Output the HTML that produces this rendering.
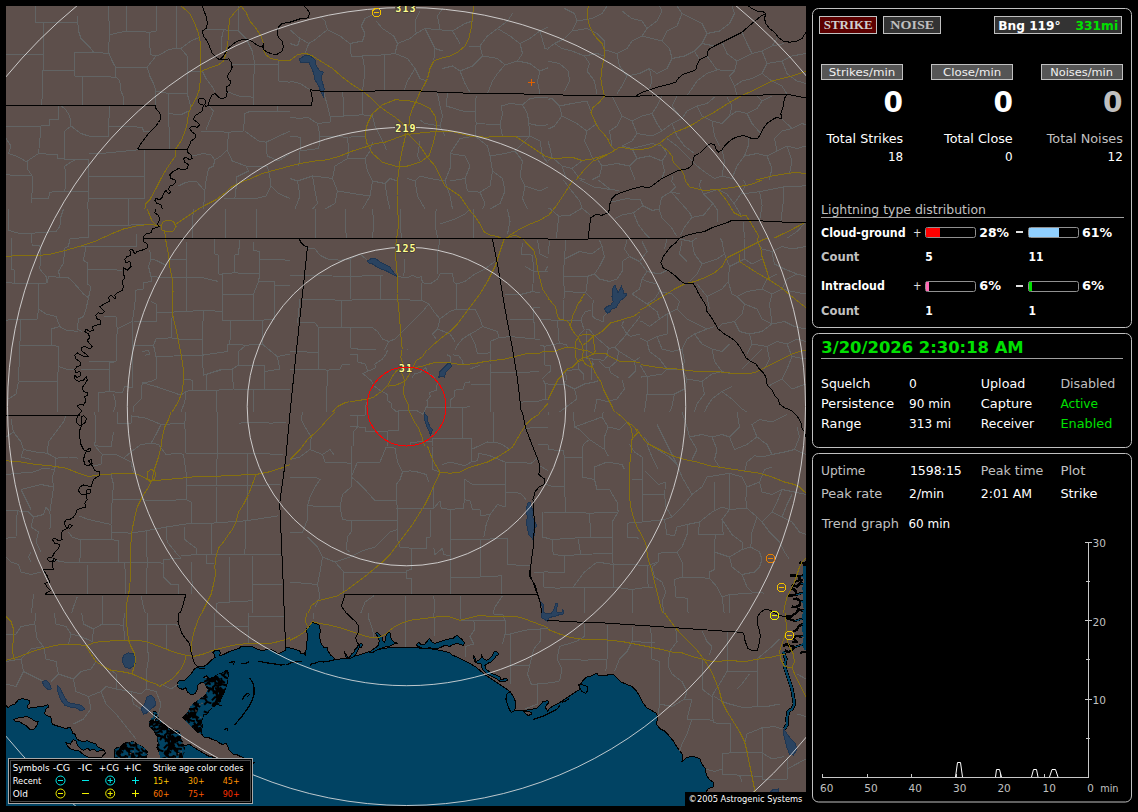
<!DOCTYPE html>
<html><head><meta charset="utf-8"><title>Lightning Display</title>
<style>html,body{margin:0;padding:0;background:#000;overflow:hidden}svg{display:block}text{white-space:pre}</style></head>
<body><svg width="1138" height="812" viewBox="0 0 1138 812">
<rect width="1138" height="812" fill="#000"/>
<defs><pattern id="marsh2" width="16" height="16" patternUnits="userSpaceOnUse"><rect width="16" height="16" fill="#000"/><rect x="10.5" y="5.1" width="2.0" height="2.9" fill="#014363"/><rect x="1.4" y="14.4" width="1.3" height="1.9" fill="#014363"/><rect x="6.2" y="1.4" width="2.1" height="2.0" fill="#014363"/><rect x="15.1" y="8.5" width="1.7" height="2.7" fill="#014363"/><rect x="10.5" y="3.4" width="1.1" height="1.9" fill="#014363"/><rect x="9.7" y="9.3" width="2.7" height="1.6" fill="#014363"/><rect x="7.2" y="12.6" width="1.4" height="2.2" fill="#014363"/><rect x="8.6" y="9.8" width="2.4" height="3.9" fill="#014363"/><rect x="1.4" y="14.4" width="2.1" height="2.9" fill="#014363"/><rect x="4.8" y="7.9" width="1.4" height="1.2" fill="#014363"/><rect x="13.4" y="10.7" width="1.2" height="1.4" fill="#014363"/><rect x="6.7" y="13.2" width="1.9" height="2.7" fill="#014363"/><rect x="7.7" y="14.5" width="2.4" height="1.7" fill="#014363"/><rect x="2.6" y="9.6" width="2.5" height="1.5" fill="#014363"/></pattern></defs>
<defs><clipPath id="mc"><rect x="6" y="6" width="800" height="800"/></clipPath><pattern id="marsh" width="48" height="48" patternUnits="userSpaceOnUse"><rect width="48" height="48" fill="#014363"/><path d="M15.5 7.2 L15.7 5.5 L17.4 4.4 L19.0 4.8 M17.4 4.4 L20.0 1.9 L18.7 -0.4 M20.0 1.9 M15.5 55.2 L15.7 53.5 L17.4 52.4 L19.0 52.8 M17.4 52.4 L20.0 49.9 L18.7 47.6 M20.0 49.9 M3.0 28.1 L5.8 25.8 L4.9 23.3 M5.8 25.8 L8.5 24.1 L8.3 21.5 M8.5 24.1 L8.6 22.5 L11.0 22.2 M8.6 22.5 L10.6 21.1 L9.9 19.3 M10.6 21.1 M27.6 25.2 L28.8 21.5 L30.9 20.8 M28.8 21.5 L31.2 20.7 L32.2 18.0 L34.2 16.8 L36.0 18.4 M34.2 16.8 L38.0 17.6 L39.4 18.5 M31.1 47.7 L34.0 45.4 L36.5 46.6 M34.0 45.4 L35.7 44.2 L35.0 40.9 M35.7 44.2 L37.2 43.0 L37.9 41.3 L39.5 38.5 M31.1 -0.3 L34.0 -2.6 L36.5 -1.4 M34.0 -2.6 L35.7 -3.8 L35.0 -7.1 M35.7 -3.8 L37.2 -5.0 L37.9 -6.7 L39.5 -9.5 M32.8 18.3 L34.3 19.7 L33.2 21.2 M34.3 19.7 L36.1 20.1 L38.1 21.2 L40.7 19.2 M38.1 21.2 M45.7 32.7 L44.0 32.4 L42.8 33.6 L43.2 36.3 M42.8 33.6 L43.2 36.5 L40.8 38.5 L41.6 40.1 M40.8 38.5 L40.1 40.7 L41.4 42.8 M40.1 40.7 L37.4 41.2 L36.4 43.2 M37.4 41.2 M12.7 39.8 L16.3 41.2 L17.4 39.4 M16.3 41.2 L17.7 42.3 L20.5 44.7 L23.2 43.3 M20.5 44.7 M15.8 10.7 L18.9 9.0 L20.1 6.5 L17.3 5.2 M20.1 6.5 L20.9 4.6 L21.1 1.1 M16.8 46.8 L18.8 46.6 L19.6 43.9 M18.8 46.6 L20.2 47.5 L20.6 50.9 M16.8 -1.2 L18.8 -1.4 L19.6 -4.1 M18.8 -1.4 L20.2 -0.5 L20.6 2.9 M22.9 8.6 L20.6 5.5 L18.3 3.1 L16.5 3.3 M18.3 3.1 L14.5 2.9 L11.8 5.2 L9.6 6.1 M6.3 0.7 L10.1 0.2 L12.8 2.5 L12.6 5.0 M12.8 2.5 L13.5 4.7 M6.3 48.7 L10.1 48.2 L12.8 50.5 L12.6 53.0 M12.8 50.5 L13.5 52.7 M40.0 2.9 L41.1 -0.5 L44.2 -2.4 L43.9 -3.9 M44.2 -2.4 L45.7 -3.7 L45.6 -6.1 M45.7 -3.7 L48.5 -4.2 L49.1 -2.6 M48.5 -4.2 L50.7 -4.4 L51.4 -6.9 M50.7 -4.4 L54.0 -2.5 M40.0 50.9 L41.1 47.5 L44.2 45.6 L43.9 44.1 M44.2 45.6 L45.7 44.3 L45.6 41.9 M45.7 44.3 L48.5 43.8 L49.1 45.4 M48.5 43.8 L50.7 43.6 L51.4 41.1 M50.7 43.6 L54.0 45.5 M-8.0 2.9 L-6.9 -0.5 L-3.8 -2.4 L-4.1 -3.9 M-3.8 -2.4 L-2.3 -3.7 L-2.4 -6.1 M-2.3 -3.7 L0.5 -4.2 L1.1 -2.6 M0.5 -4.2 L2.7 -4.4 L3.4 -6.9 M2.7 -4.4 L6.0 -2.5 M-8.0 50.9 L-6.9 47.5 L-3.8 45.6 L-4.1 44.1 M-3.8 45.6 L-2.3 44.3 L-2.4 41.9 M-2.3 44.3 L0.5 43.8 L1.1 45.4 M0.5 43.8 L2.7 43.6 L3.4 41.1 M2.7 43.6 L6.0 45.5 M29.4 24.3 L26.6 24.4 L24.7 21.7 L25.4 19.7 L28.9 18.8 L29.3 16.7 M28.9 18.8 L31.4 19.1 L31.5 22.4 M31.4 19.1 M7.4 34.4 L5.8 33.6 L4.8 32.1 L1.8 31.3 L2.4 29.1 M1.8 31.3 L-0.6 31.1 L-2.2 29.0 M-0.6 31.1 M55.4 34.4 L53.8 33.6 L52.8 32.1 L49.8 31.3 L50.4 29.1 M49.8 31.3 L47.4 31.1 L45.8 29.0 M47.4 31.1 M21.1 0.9 L20.9 4.8 L22.6 4.9 M20.9 4.8 L21.6 6.2 L23.1 7.2 L23.3 10.8 L25.7 11.5 M23.3 10.8 L23.4 13.1 L25.0 13.7 M23.4 13.1 L21.0 15.0 L21.1 18.7 L23.1 19.5 M21.1 18.7 M21.1 48.9 L20.9 52.8 L22.6 52.9 M20.9 52.8 L21.6 54.2 L23.1 55.2 L23.3 58.8 L25.7 59.5 M23.3 58.8 L23.4 61.1 L25.0 61.7 M23.4 61.1 L21.0 63.0 L21.1 66.7 L23.1 67.5 M21.1 66.7 M26.5 44.5 L29.1 46.5 L28.8 48.7 L26.3 49.0 M28.8 48.7 L30.1 50.9 L33.1 52.8 M26.5 -3.5 L29.1 -1.5 L28.8 0.7 L26.3 1.0 M28.8 0.7 L30.1 2.9 L33.1 4.8 M1.8 0.9 L-0.3 0.7 L-3.2 -0.5 L-6.4 -2.3 L-8.5 -2.5 L-9.0 0.3 M-8.5 -2.5 M1.8 48.9 L-0.3 48.7 L-3.2 47.5 L-6.4 45.7 L-8.5 45.5 L-9.0 48.3 M-8.5 45.5 M49.8 0.9 L47.7 0.7 L44.8 -0.5 L41.6 -2.3 L39.5 -2.5 L39.0 0.3 M39.5 -2.5 M49.8 48.9 L47.7 48.7 L44.8 47.5 L41.6 45.7 L39.5 45.5 L39.0 48.3 M39.5 45.5 M30.5 19.4 L29.0 19.8 L26.9 18.3 L28.4 15.8 M26.9 18.3 L24.8 18.0 L23.9 16.2 M24.8 18.0 M0.2 17.5 L0.0 19.1 L1.0 20.8 L3.5 20.5 M1.0 20.8 L3.5 21.8 L3.0 23.6 M3.5 21.8 L5.6 23.2 L8.9 22.3 M5.6 23.2 L6.0 25.1 L4.7 27.8 L2.6 29.5 L2.4 32.6 M2.6 29.5 M48.2 17.5 L48.0 19.1 L49.0 20.8 L51.5 20.5 M49.0 20.8 L51.5 21.8 L51.0 23.6 M51.5 21.8 L53.6 23.2 L56.9 22.3 M53.6 23.2 L54.0 25.1 L52.7 27.8 L50.6 29.5 L50.4 32.6 M50.6 29.5 M42.8 30.1 L40.6 28.4 L40.1 24.9 L40.1 21.2 L41.0 19.3 L38.5 17.1 M41.0 19.3 L41.5 16.7 L38.9 15.5 M41.5 16.7 L41.7 15.2 L43.5 13.1 M31.6 3.2 L33.7 0.2 L32.6 -2.4 M33.7 0.2 L35.4 -3.0 L38.0 -2.0 M35.4 -3.0 L36.7 -4.1 L39.1 -2.6 M36.7 -4.1 L38.3 -5.0 L41.7 -6.9 L41.1 -8.9 M41.7 -6.9 M31.6 51.2 L33.7 48.2 L32.6 45.6 M33.7 48.2 L35.4 45.0 L38.0 46.0 M35.4 45.0 L36.7 43.9 L39.1 45.4 M36.7 43.9 L38.3 43.0 L41.7 41.1 L41.1 39.1 M41.7 41.1 M24.8 22.3 L22.9 20.1 L21.7 21.1 M22.9 20.1 L20.4 17.6 L18.7 16.3 L17.1 16.6 M18.7 16.3 M35.9 12.6 L33.2 13.1 L31.1 12.5 L29.6 12.1 L29.7 9.8 M29.6 12.1 L27.7 10.4 L26.6 11.4 M27.7 10.4 L26.7 7.0 L23.5 7.2 M26.7 7.0 L25.1 5.2 L22.8 5.8 M25.1 5.2 L23.6 4.7 L23.7 2.9 M23.6 4.7 M46.6 20.9 L44.4 22.2 L42.6 19.4 M44.4 22.2 L41.4 23.6 L39.2 21.6 M41.4 23.6 L39.2 23.8 L38.0 25.8 M39.2 23.8 L37.4 25.0 L35.0 25.6 L33.7 23.7 M35.0 25.6 M8.0 7.8 L8.4 10.4 L6.3 11.8 M8.4 10.4 L9.7 11.8 L11.9 12.9 L13.4 12.6 L16.4 11.1 L17.8 12.0 M16.4 11.1 L18.7 7.9 L17.9 4.7 M18.7 7.9 M18.5 31.0 L15.0 29.8 L12.9 32.0 M15.0 29.8 L12.9 26.5 L9.1 26.2 L6.4 25.9 L4.9 24.5 L2.9 26.6 M4.9 24.5 M31.1 36.7 L29.7 36.2 L28.5 38.0 M29.7 36.2 L27.8 37.2 L26.0 37.3 L25.2 39.0 M26.0 37.3 L24.5 37.0 L23.7 35.0 M24.5 37.0 L23.2 35.3 L22.4 34.0 L22.1 32.4 L23.3 30.8 M22.1 32.4 M20.4 17.8 L18.2 16.8 L16.6 19.3 M18.2 16.8 L16.4 15.9 L12.8 15.8 L11.0 18.5 M12.8 15.8 L10.8 18.0 L8.0 17.9 M2.7 28.6 L4.4 25.0 L2.9 23.9 M4.4 25.0 L5.5 21.9 L2.3 20.9 M5.5 21.9 L5.4 19.9 M35.8 1.5 L36.6 -2.3 L35.6 -3.7 L37.0 -4.8 M35.6 -3.7 L36.3 -5.6 L38.6 -5.0 M36.3 -5.6 L34.8 -7.8 L35.5 -9.9 M34.8 -7.8 L35.1 -9.3 L37.9 -11.3 L37.2 -14.3 M37.9 -11.3 M35.8 49.5 L36.6 45.7 L35.6 44.3 L37.0 43.2 M35.6 44.3 L36.3 42.4 L38.6 43.0 M36.3 42.4 L34.8 40.2 L35.5 38.1 M34.8 40.2 L35.1 38.7 L37.9 36.7 L37.2 33.7 M37.9 36.7 M3.0 9.4 L5.2 9.4 L7.2 10.1 L9.4 9.8 L10.6 8.3 M9.4 9.8 L13.2 9.2 L15.2 8.4 L18.7 6.8 L20.2 9.4 M18.7 6.8 L20.9 6.4 L21.8 8.9 M20.9 6.4 M24.6 18.8 L26.2 18.9 L29.9 17.6 L31.5 19.0 L34.7 17.7 M31.5 19.0 L31.1 20.9 L28.3 21.1 M31.1 20.9 L28.6 23.6 L28.9 27.2 L26.4 28.7 M28.9 27.2 M9.6 11.9 L11.4 15.2 L14.9 15.0 M11.4 15.2 L12.4 17.0 L13.0 20.9 L11.1 21.4 M13.0 20.9 L13.7 23.3 M11.2 2.4 L9.5 2.5 L7.3 4.5 L5.9 5.1 L3.5 5.0 L2.5 3.4 M3.5 5.0 L0.8 6.3 L0.2 7.7 L-1.9 8.0 M0.2 7.7 L0.9 11.1 M59.2 2.4 L57.5 2.5 L55.3 4.5 L53.9 5.1 L51.5 5.0 L50.5 3.4 M51.5 5.0 L48.8 6.3 L48.2 7.7 L46.1 8.0 M48.2 7.7 L48.9 11.1 M3.0 4.9 L2.6 7.7 L2.8 9.8 L2.0 12.3 L0.5 12.5 M2.0 12.3 L-0.7 14.5 L-2.2 16.5 L-3.1 18.2 L-1.2 20.8 M-3.1 18.2 L-3.9 19.9 L-1.2 22.0 M-3.9 19.9 M51.0 4.9 L50.6 7.7 L50.8 9.8 L50.0 12.3 L48.5 12.5 M50.0 12.3 L47.3 14.5 L45.8 16.5 L44.9 18.2 L46.8 20.8 M44.9 18.2 L44.1 19.9 L46.8 22.0 M44.1 19.9 M4.3 29.9 L4.2 32.2 L5.9 32.3 M4.2 32.2 L4.1 35.7 L5.2 37.2 L4.2 39.7 L1.4 40.6 M4.2 39.7 L1.5 42.3 L-1.6 42.2 L-3.7 43.8 M52.3 29.9 L52.2 32.2 L53.9 32.3 M52.2 32.2 L52.1 35.7 L53.2 37.2 L52.2 39.7 L49.4 40.6 M52.2 39.7 L49.5 42.3 L46.4 42.2 L44.3 43.8 M2.0 45.1 L4.1 45.4 L4.9 46.7 L4.9 48.3 L7.1 50.4 L8.2 52.3 M2.0 -2.9 L4.1 -2.6 L4.9 -1.3 L4.9 0.3 L7.1 2.4 L8.2 4.3 M28.0 20.4 L26.9 18.8 L28.3 16.8 M26.9 18.8 L25.9 15.4 L26.8 13.1 L28.5 13.0 M26.8 13.1 L27.5 10.4 L25.7 8.0 M27.5 10.4 L29.6 8.6 L32.1 10.3 M29.6 8.6 L29.3 6.9 M33.2 5.3 L36.5 6.5 L38.9 8.8 L38.0 10.6 M38.9 8.8 L41.7 9.9 L43.8 10.5 L46.7 11.2 L49.0 10.4 L51.8 12.3 M49.0 10.4 M-14.8 5.3 L-11.5 6.5 L-9.1 8.8 L-10.0 10.6 M-9.1 8.8 L-6.3 9.9 L-4.2 10.5 L-1.3 11.2 L1.0 10.4 L3.8 12.3 M1.0 10.4 M32.6 43.0 L35.4 43.6 L39.1 43.2 L42.7 43.5 L43.0 45.8 M42.7 43.5 L45.1 43.1 L45.9 45.3 M45.1 43.1 L47.2 40.4 L50.6 40.9 M47.2 40.4 M-15.4 43.0 L-12.6 43.6 L-8.9 43.2 L-5.3 43.5 L-5.0 45.8 M-5.3 43.5 L-2.9 43.1 L-2.1 45.3 M-2.9 43.1 L-0.8 40.4 L2.6 40.9 M-0.8 40.4 M41.8 44.6 L43.8 44.3 L45.0 46.2 M43.8 44.3 L45.0 41.9 L44.2 40.5 M14.6 25.1 L11.8 24.0 L11.5 22.5 M11.8 24.0 L10.2 21.1 L8.4 20.9 L5.1 22.3 L4.5 25.8 L3.3 28.5 M24.8 23.7 L27.7 23.8 L29.1 22.9 L28.9 20.0 M6.8 9.6 L5.5 7.4 L4.6 6.0 L6.3 3.2 L7.7 1.2 L9.4 1.1 L12.3 -1.6 L12.0 -4.9 M12.3 -1.6 L16.1 -0.9 L17.9 -2.9 M16.1 -0.9 M6.8 57.6 L5.5 55.4 L4.6 54.0 L6.3 51.2 L7.7 49.2 L9.4 49.1 L12.3 46.4 L12.0 43.1 M12.3 46.4 L16.1 47.1 L17.9 45.1 M16.1 47.1 M20.9 37.8 L17.3 39.0 L16.3 41.6 L18.0 42.4 M16.3 41.6 L17.8 45.1 L16.6 46.6 M17.8 45.1 L16.3 47.8 L13.3 50.3 M20.9 -10.2 L17.3 -9.0 L16.3 -6.4 L18.0 -5.6 M16.3 -6.4 L17.8 -2.9 L16.6 -1.4 M17.8 -2.9 L16.3 -0.2 L13.3 2.3 M40.3 33.5 L42.4 33.7 L44.2 35.4 L45.4 36.9 L48.8 36.9 M45.4 36.9 L47.0 37.8 L49.6 36.8 M47.0 37.8 L48.5 37.1 L51.5 38.7 M48.5 37.1 L51.4 35.9 M-7.7 33.5 L-5.6 33.7 L-3.8 35.4 L-2.6 36.9 L0.8 36.9 M-2.6 36.9 L-1.0 37.8 L1.6 36.8 M-1.0 37.8 L0.5 37.1 L3.5 38.7 M0.5 37.1 L3.4 35.9 M36.3 34.1 L35.9 35.9 L38.6 36.7 M35.9 35.9 L36.4 37.6 L38.5 38.1 M36.4 37.6 L38.1 39.2 L41.4 38.5 M36.9 28.9 L35.4 28.7 L31.9 28.8 L31.3 30.7 M31.9 28.8 L30.7 27.6 L29.2 27.6 L27.4 29.3 M29.2 27.6 L25.7 27.5 L24.8 24.2 M25.7 27.5 M24.7 27.7 L23.9 29.7 L26.4 32.1 M23.9 29.7 L23.0 31.2 L24.3 33.1 M23.0 31.2 L21.4 31.5 L20.7 33.4 L22.9 35.8 M20.7 33.4 M11.2 22.1 L9.2 20.9 L7.8 22.9 M9.2 20.9 L7.3 19.6 L6.2 17.7 L8.2 15.1 M6.2 17.7 L4.5 16.8 L2.3 19.5 M4.5 16.8 L2.8 14.3 L0.9 14.5 M2.8 14.3 L4.2 11.3 L3.3 9.8 M4.2 11.3 L3.5 9.2 L5.1 6.9 M3.5 9.2 M59.2 22.1 L57.2 20.9 L55.8 22.9 M57.2 20.9 L55.3 19.6 L54.2 17.7 L56.2 15.1 M54.2 17.7 L52.5 16.8 L50.3 19.5 M52.5 16.8 L50.8 14.3 L48.9 14.5 M50.8 14.3 L52.2 11.3 L51.3 9.8 M52.2 11.3 L51.5 9.2 L53.1 6.9 M51.5 9.2 M5.1 9.9 L5.9 13.5 L8.7 16.2 L11.4 15.8 M8.7 16.2 L11.6 17.9 M20.6 27.6 L22.8 25.2 L25.9 25.3 L27.5 24.2 L30.0 25.4 M27.5 24.2 L27.8 21.7 L29.5 19.1 L31.0 19.4 M29.5 19.1 L32.2 18.5 M41.9 42.9 L41.2 45.6 L43.2 47.6 L44.8 46.9 M43.2 47.6 L44.9 50.0 M41.9 -5.1 L41.2 -2.4 L43.2 -0.4 L44.8 -1.1 M43.2 -0.4 L44.9 2.0 M24.6 30.7 L25.1 27.4 L26.9 26.7 L29.7 28.6 L31.0 30.3 L33.3 30.5 M31.0 30.3 L33.4 32.5 L33.3 34.6 M33.4 32.5 L36.7 34.4 L36.6 38.3" stroke="#000" stroke-width="2" fill="none" stroke-linecap="square"/><rect x="7.9" y="44.6" width="1.5" height="1.2" fill="#5d4f4b"/><rect x="3.3" y="38.3" width="1.5" height="1.2" fill="#5d4f4b"/><rect x="9.3" y="30.8" width="1.5" height="1.2" fill="#5d4f4b"/><rect x="34.6" y="39.1" width="1.5" height="1.2" fill="#5d4f4b"/><rect x="7.0" y="32.0" width="1.5" height="1.2" fill="#5d4f4b"/><rect x="39.9" y="38.2" width="1.5" height="1.2" fill="#5d4f4b"/><rect x="19.8" y="47.8" width="1.5" height="1.2" fill="#5d4f4b"/><rect x="36.5" y="31.2" width="1.5" height="1.2" fill="#5d4f4b"/><rect x="37.4" y="22.5" width="1.5" height="1.2" fill="#5d4f4b"/><rect x="37.6" y="11.1" width="1.5" height="1.2" fill="#5d4f4b"/><rect x="33.8" y="33.0" width="1.5" height="1.2" fill="#5d4f4b"/><rect x="47.2" y="32.6" width="1.5" height="1.2" fill="#5d4f4b"/><rect x="23.1" y="38.7" width="1.5" height="1.2" fill="#5d4f4b"/><rect x="38.3" y="17.2" width="1.5" height="1.2" fill="#5d4f4b"/></pattern></defs>
<g clip-path="url(#mc)" shape-rendering="crispEdges">
<rect x="6" y="6" width="800" height="800" fill="#5d4f4b"/>
<path d="M6.0 705.4 L8.2 707.6 L10.5 705.4 L15.0 703.9 L18.7 699.4 L22.4 698.7 L26.9 699.4 L29.9 700.9 L29.2 703.9 L26.9 706.1 L28.4 708.4 L32.1 707.6 L37.4 706.9 L43.3 706.1 L47.8 704.6 L48.6 706.9 L45.6 709.1 L44.8 713.6 L47.1 715.9 L50.8 716.6 L51.6 720.3 L52.3 724.1 L56.0 725.6 L61.3 727.1 L65.8 728.6 L70.2 727.1 L71.7 730.0 L72.5 733.0 L75.5 734.5 L76.2 738.3 L79.2 740.5 L83.7 742.0 L87.4 740.5 L91.2 742.7 L95.6 743.5 L97.1 746.5 L101.6 748.7 L104.6 750.2 L105.3 753.2 L103.1 755.4 L101.6 757.7 L101.6 763.7 L114.3 763.7 L114.3 757.7 L115.1 753.9 L114.3 750.2 L116.5 748.0 L120.3 747.2 L122.5 744.2 L127.0 742.0 L130.0 742.7 L133.0 741.2 L136.0 744.2 L140.4 745.7 L144.9 748.7 L147.2 751.0 L146.4 757.7 L146.4 763.7 L161.4 763.7 L161.4 757.7 L159.9 753.2 L156.9 747.2 L158.4 742.7 L161.4 739.8 L162.9 736.8 L159.9 732.3 L155.4 730.8 L151.7 727.8 L149.4 724.8 L151.7 721.8 L153.9 720.3 L154.6 715.9 L153.1 712.1 L155.4 711.4 L156.9 715.1 L158.4 717.3 L159.9 721.8 L164.4 724.8 L167.3 727.8 L170.3 730.8 L176.0 732.3 L176.0 732.3 L180.8 737.8 L181.5 741.6 L179.3 744.6 L185.3 745.3 L189.8 744.6 L194.2 747.6 L200.2 751.3 L207.7 755.8 L213.7 757.3 L219.6 759.5 L231.6 764.0 L249.5 767.0 L254.0 762.5 L248.0 759.5 L240.5 756.5 L237.6 755.0 L233.1 754.3 L229.3 750.5 L227.8 746.1 L225.6 743.1 L222.6 744.6 L219.6 743.1 L216.6 740.8 L212.2 739.3 L207.7 737.1 L203.9 737.1 L201.7 734.1 L201.0 729.6 L202.5 726.6 L201.7 722.2 L202.5 717.7 L203.9 714.7 L207.7 713.9 L209.2 710.2 L212.9 707.2 L216.6 704.2 L221.1 705.7 L220.4 701.2 L221.9 696.8 L224.1 692.3 L225.6 687.8 L227.1 683.3 L227.8 678.1 L228.6 673.6 L227.1 669.9 L222.6 672.9 L218.1 674.4 L213.7 677.3 L209.2 678.8 L206.2 675.9 L203.9 677.3 L204.7 681.8 L201.0 682.6 L198.0 684.8 L197.2 689.3 L195.0 693.8 L191.2 694.5 L187.5 692.3 L186.0 687.8 L183.0 689.3 L179.3 688.6 L177.1 686.3 L177.1 682.6 L180.0 680.3 L184.5 680.3 L187.5 677.3 L191.2 673.6 L194.2 669.1 L198.0 666.9 L203.2 666.9 L207.7 663.9 L211.4 660.2 L215.2 657.2 L214.4 654.9 L212.9 652.7 L215.2 650.5 L218.9 650.5 L220.4 652.7 L219.6 655.7 L222.6 654.9 L228.6 652.0 L234.6 649.7 L239.8 648.2 L240.5 646.0 L251.0 646.0 L254.0 647.5 L258.5 649.7 L263.0 650.5 L268.9 649.0 L273.4 650.5 L277.9 653.4 L280.9 652.7 L285.4 650.5 L285.4 648.2 L288.4 647.5 L294.3 649.0 L300.0 651.2 L300.9 653.8 L304.6 653.0 L305.4 656.0 L306.1 649.3 L306.9 641.8 L307.6 634.4 L306.1 631.4 L306.9 628.4 L309.9 625.4 L312.1 622.4 L315.1 623.2 L318.8 624.6 L320.3 629.9 L319.6 637.3 L321.1 643.3 L324.1 647.8 L327.1 647.1 L327.8 650.8 L330.8 655.3 L333.8 657.5 L334.5 659.8 L342.7 658.7 L350.2 657.2 L357.7 655.3 L363.7 653.5 L369.6 651.5 L377.1 649.7 L384.6 648.3 L392.0 647.5 L399.5 647.5 L407.0 647.8 L414.4 647.5 L421.9 648.3 L429.4 648.7 L436.9 649.7 L444.3 651.2 L450.0 652.7 L452.0 655.1 L457.9 657.3 L463.9 660.3 L469.9 663.3 L475.9 667.1 L480.3 670.8 L484.8 674.5 L489.3 677.5 L493.8 680.5 L498.3 683.5 L502.7 686.5 L507.2 689.5 L510.2 691.7 L513.2 696.2 L515.4 701.4 L515.9 706.6 L514.7 710.4 L520.7 710.8 L525.2 710.4 L529.6 709.6 L534.1 708.9 L537.1 708.1 L539.3 705.9 L541.6 703.7 L543.1 701.4 L547.6 700.7 L549.1 702.2 L546.1 705.2 L545.8 708.1 L547.6 711.1 L549.8 708.1 L553.5 705.9 L558.0 703.7 L562.5 700.7 L567.0 697.7 L571.5 694.7 L575.9 691.7 L579.7 689.5 L578.9 685.7 L581.2 683.5 L583.4 679.8 L587.1 676.8 L590.9 676.0 L593.9 674.5 L596.9 673.0 L598.4 675.3 L602.8 676.0 L610.0 674.5 L613.2 674.3 L616.6 677.6 L621.0 682.0 L626.5 684.3 L632.1 686.5 L636.5 690.9 L639.8 696.4 L643.2 703.1 L646.5 707.5 L652.0 710.8 L656.4 713.1 L657.6 717.5 L656.4 724.1 L659.8 728.6 L664.2 730.8 L668.6 735.2 L673.1 740.8 L676.4 746.3 L679.7 750.7 L683.0 755.2 L681.9 761.8 L686.4 757.4 L693.0 756.3 L699.7 758.5 L701.9 764.0 L705.2 768.5 L706.3 775.1 L709.6 779.5 L714.1 782.9 L712.9 787.3 L708.5 788.4 L706.3 791.7 L705.2 808.3 L705.0 812.0 L0.0 812.0Z" fill="#014363" stroke="#000" stroke-width="1" stroke-linejoin="round"/>
<path d="M344.2 651.5 L345.7 654.1 L348.0 657.5 L350.2 656.8 L351.7 653.8 L353.9 652.3 L354.7 650.0 L356.9 647.8 L358.4 644.8 L361.4 643.3 L362.9 644.8 L361.4 647.1 L359.2 647.8 L357.7 650.8 L356.2 653.8 L353.2 656.8 L350.2 658.6 L346.5 658.3Z" fill="#014363" stroke="#000" stroke-width="1" stroke-linejoin="round"/>
<path d="M369.6 652.3 L371.9 650.0 L375.6 647.8 L378.6 644.8 L379.3 640.3 L377.8 636.6 L375.6 633.6 L377.1 632.1 L380.1 635.1 L382.3 637.3 L383.1 641.1 L384.6 642.6 L385.3 639.6 L386.1 635.9 L387.6 632.1 L389.8 632.1 L390.5 635.9 L391.3 638.8 L393.5 641.8 L398.0 643.3 L393.5 644.1 L389.1 646.3 L384.6 647.1 L380.1 648.6 L375.6 650.8 L371.9 653.0Z" fill="#014363" stroke="#000" stroke-width="1" stroke-linejoin="round"/>
<path d="M416.7 644.1 L418.9 642.6 L421.2 644.8 L424.9 644.1 L427.9 640.3 L429.4 638.1 L430.9 640.3 L432.4 642.6 L435.4 643.3 L439.8 641.8 L444.3 640.3 L450.0 638.8 L453.3 638.1 L457.0 635.1 L459.3 637.3 L461.5 639.1 L464.5 642.6 L463.7 645.6 L460.8 644.5 L457.0 643.6 L453.3 644.5 L450.0 646.3 L444.3 645.6 L439.8 647.8 L435.4 648.6 L429.4 647.8 L423.4 648.6 L419.7 647.1 L416.7 645.6Z" fill="#014363" stroke="#000" stroke-width="1" stroke-linejoin="round"/>
<path d="M473.6 655.9 L475.9 658.8 L475.1 661.8 L478.8 660.3 L481.8 657.3 L481.1 654.4 L483.3 658.8 L486.3 660.3 L489.3 658.8 L492.3 655.9 L493.8 652.1 L496.8 651.4 L499.0 654.4 L496.0 655.9 L494.5 658.8 L491.5 661.8 L487.8 663.3 L484.8 665.6 L486.3 669.3 L489.3 671.5 L492.3 673.8 L496.8 675.3 L499.8 676.8 L501.2 679.8 L505.7 678.3 L508.0 679.8 L505.7 681.2 L502.7 682.0 L499.8 681.2 L496.8 679.0 L492.3 676.8 L487.8 674.5 L484.1 671.5 L481.8 667.8 L481.1 664.1 L477.3 663.3 L474.4 661.8Z" fill="#014363" stroke="#000" stroke-width="1" stroke-linejoin="round"/>
<path d="M508.0 693.2 L510.2 691.7 L513.2 696.2 L515.4 701.4 L515.9 706.6 L514.7 710.4 L511.7 712.3 L510.2 711.1 L508.7 708.1 L507.2 703.7 L506.0 699.2 L506.5 694.7Z" fill="#014363" stroke="#000" stroke-width="1" stroke-linejoin="round"/>
<path d="M578.9 684.2 L583.4 685.0 L587.1 686.5 L587.9 690.2 L585.7 693.2 L581.9 691.7 L580.4 688.7Z" fill="#014363" stroke="#000" stroke-width="1" stroke-linejoin="round"/>
<path d="M204.7 677.3 L209.2 678.8 L213.7 677.3 L218.1 674.4 L222.6 672.9 L227.1 669.9 L228.6 673.6 L227.8 678.1 L227.1 683.3 L225.6 687.8 L224.1 692.3 L221.9 696.8 L220.4 701.2 L221.1 705.7 L216.6 704.2 L212.9 707.2 L209.2 710.2 L207.7 713.9 L203.9 714.7 L202.5 717.7 L201.7 722.2 L202.5 726.6 L201.0 729.6 L201.7 734.1 L197.2 732.6 L192.7 728.1 L188.3 723.7 L182.3 717.7 L186.8 713.2 L189.8 707.2 L194.2 702.7 L200.2 698.3 L204.7 695.3 L207.7 689.3 L204.7 684.8 L203.9 680.3Z" fill="url(#marsh)"/>
<path d="M149.4 721.4 L153.9 714.7 L156.1 711.7 L157.6 714.7 L156.9 717.7 L162.9 723.7 L168.8 728.1 L174.8 729.6 L179.3 731.1 L181.5 737.1 L179.3 744.6 L173.3 746.8 L167.3 750.5 L162.9 755.0 L160.6 758.0 L159.1 753.5 L159.9 747.6 L157.6 743.1 L156.9 737.1 L152.4 729.6 L149.4 726.6Z" fill="url(#marsh)"/>
<path d="M114.3 760.7 L115.1 753.9 L114.3 750.2 L116.5 748.0 L120.3 747.2 L122.5 744.2 L127.0 742.0 L130.0 742.7 L133.0 741.2 L136.0 744.2 L140.4 745.7 L144.9 748.7 L147.2 751.0 L146.4 760.7Z" fill="url(#marsh)"/>
<path d="M161.4 760.7 L159.9 753.2 L156.9 747.2 L158.4 742.7 L161.4 739.8 L162.9 736.8 L159.9 732.3 L155.4 730.8 L151.7 727.8 L149.4 724.8 L151.7 721.8 L153.9 720.3 L154.6 715.9 L153.1 712.1 L155.4 711.4 L156.9 715.1 L158.4 717.3 L159.9 721.8 L164.4 724.8 L167.3 727.8 L170.3 730.8 L176.0 732.3 L182.3 739.8 L185.3 750.2 L182.3 760.7Z" fill="url(#marsh)"/>
<path d="M130.0 743.1 L134.5 741.6 L139.0 744.6 L146.4 750.5 L147.9 755.0 L144.9 758.0 L139.0 759.5 L130.0 759.5Z" fill="url(#marsh)"/>
<path d="M807.2 562.4 L802.1 563.3 L799.5 562.4 M807.2 565.9 L802.9 565.0 M807.2 574.5 L800.3 576.2 L793.4 575.3 L790.0 575.3 M800.3 576.2 L798.6 580.5 L795.2 581.4 M807.2 584.8 L800.3 583.1 L796.9 586.6 L791.7 584.8 M800.3 583.1 L802.1 578.8 M807.2 591.7 L800.3 593.4 L795.2 595.2 L790.0 595.5 L786.6 596.0 M796.9 594.8 L795.2 590.0 L791.7 588.3 M807.2 600.3 L800.3 601.2 L796.9 598.6 L793.4 599.5 M800.3 601.2 L799.5 605.5 L795.2 607.2 L791.7 606.4 M807.2 609.0 L802.1 610.7 L798.6 609.0 L796.9 612.4 L791.7 615.9 L786.6 616.7 M807.2 617.6 L800.3 619.3 L795.2 621.0 L790.0 619.3 L785.7 617.6 M807.2 626.2 L802.1 624.5 L798.6 626.2 L796.9 629.7 L793.4 631.4 M807.2 634.8 L800.3 636.6 L796.9 635.7 L793.4 638.3 L796.9 641.7 L791.7 641.7 M807.2 643.4 L800.3 645.2 L795.2 646.9 L790.0 646.0 L786.6 644.3 L783.1 646.0 M795.2 646.9 L791.7 650.3 L788.3 652.1 L784.8 650.3 M807.2 652.1 L802.1 652.1 L800.3 653.8" fill="none" stroke="#000" stroke-width="2.4" stroke-linejoin="round"/>
<path d="M807.2 575.3 L800.7 576.6 M807.2 584.5 L801.2 583.4 M807.2 592.1 L800.7 593.6 L796.0 595.0 M807.2 600.7 L800.7 601.4 M807.2 609.3 L802.4 610.7 M807.2 617.9 L800.7 619.3 L795.5 620.9 M807.2 626.2 L802.4 624.8 M807.2 635.2 L800.7 636.6 M807.2 643.8 L800.7 645.2 L795.5 646.7" fill="none" stroke="#014363" stroke-width="1.1"/>
<path d="M803.4 565.9 L807.2 565.9 L807.2 650.3 L804.1 650.3 L802.4 643.4 L803.8 636.6 L801.7 629.7 L803.1 622.8 L802.1 615.9 L803.8 609.0 L802.4 602.1 L803.4 595.2 L802.1 588.3 L803.8 581.4 L802.8 574.5Z" fill="#014363"/>
<path d="M65.8 742.7 L70.2 744.2 L73.2 739.8 L76.2 741.2 L77.7 745.7 L80.7 748.7 L83.7 750.2 L87.4 748.0 L89.7 750.2 L94.1 749.5 L97.1 751.7 L101.6 750.2 L104.6 751.0 L105.3 753.2 L103.1 755.4 L101.6 757.7 L89.7 757.7 L83.7 754.7 L79.2 751.0 L74.7 750.2 L70.2 748.7 L67.2 745.7Z" fill="#5d4f4b" stroke="#000" stroke-width="1" stroke-linejoin="round"/>
<path d="M13.5 719.6 L17.2 718.1 L22.4 717.3 L26.9 716.6 L31.4 718.8 L35.1 721.1 L38.1 721.8 L37.4 724.8 L35.1 727.8 L32.9 730.0 L29.9 729.3 L26.9 726.3 L23.2 724.1 L19.4 721.8 L15.7 721.8Z" fill="#5d4f4b" stroke="#000" stroke-width="1" stroke-linejoin="round"/>
<path d="M523.7 711.9 L528.1 715.6 L531.9 714.1 L531.1 712.3 L527.4 711.4Z" fill="#5d4f4b" stroke="#000" stroke-width="1" stroke-linejoin="round"/>
<path d="M286.0 665.0 L290.5 663.0 L294.9 662.1 L302.4 661.4 M309.9 665.7 L312.1 663.6 L315.9 662.9 L319.6 661.4 L323.3 662.0 L329.3 661.0 L334.5 659.8 M280.0 665.3 L283.7 664.5 M533.4 719.3 L538.6 717.8 L544.6 715.6 L550.5 712.6 L556.5 709.6 L560.3 705.4 M561.8 702.2 L566.2 700.7 L569.2 698.4 M506.5 694.7 L506.0 699.2 L507.2 703.7 L508.7 708.1 L510.2 711.1 L511.7 712.6 M249.5 678.1 L252.5 681.8 L254.0 687.8 L254.1 693.8 L252.5 699.8 L249.5 705.7 L245.8 711.0 L242.0 716.2 L237.6 721.4 L234.6 725.2 M228.6 662.4 L234.6 661.7 L233.1 665.1 M241.3 663.9 L245.8 663.2 L249.5 661.7 M258.5 660.9 L264.4 662.4 L273.4 663.9 L279.4 664.4 L285.4 664.6 M242.0 699.8 L245.0 695.3 L248.0 693.0 L249.5 694.5 L246.5 697.5 M224.1 729.6 L227.8 728.1 L227.1 730.4" fill="none" stroke="#000" stroke-width="1.2" stroke-linejoin="round"/>
<path d="M35.5 6.0 L35.5 22.2 L43.0 23.0 L43.0 70.5 L41.8 104.8 M35.5 22.2 L77.2 22.2 M77.2 16.0 L78.5 31.0 L81.0 38.5 L89.8 47.2 L93.5 52.2 M6.0 54.8 L43.0 54.8 M43.0 70.5 L74.8 70.5 L74.8 52.2 L93.5 52.2 L108.5 53.5 M74.8 70.5 L74.8 76.0 L82.2 76.0 L82.2 104.8 M82.2 76.0 L116.0 77.2 L119.8 81.0 L121.0 91.0 L123.0 96.0 L123.5 104.8 M108.5 6.0 L109.0 21.0 L109.8 34.8 L108.5 46.0 L109.0 53.5 L112.2 61.0 L115.5 67.2 L116.0 77.2 M109.8 34.8 L126.0 31.0 L126.0 6.0 M126.0 31.0 L149.8 32.2 L156.0 31.0 L156.0 6.0 M149.8 32.2 L149.8 46.0 L151.0 54.8 L157.2 56.0 L168.5 49.8 L176.0 48.0 L176.0 6.0 M115.5 67.2 L147.2 67.2 L156.0 56.0 M147.2 67.2 L149.8 76.0 L153.5 83.5 L156.0 91.0 L155.2 105.2 M156.0 91.0 L168.5 93.5 L187.2 93.5 L187.2 56.0 L181.0 48.5 L176.0 48.0 M168.5 93.5 L168.5 113.5 L169.8 148.5 M168.5 113.5 L181.0 114.8 L188.5 111.0 M187.2 71.0 L200.5 71.0 M181.0 48.5 L191.0 41.0 L199.8 37.2 M206.0 29.8 L223.5 29.8 L238.5 31.0 L238.5 6.0 M223.5 29.8 L221.0 41.0 L222.2 53.5 M238.5 31.0 L246.0 38.5 L252.2 51.0 L254.8 63.5 L253.5 81.0 L253.5 104.8 M232.2 64.8 L278.5 64.8 L278.5 81.0 L290.0 82.2 M278.5 64.8 L278.5 59.8 M202.2 71.0 L206.0 78.5 L213.5 88.5 L214.8 92.2 M228.5 92.2 L238.5 96.0 L253.5 97.2 M6.0 126.0 L41.0 126.0 L49.8 125.5 L49.8 119.8 L58.5 119.8 L58.5 106.0 M41.0 126.0 L39.8 141.0 L38.5 153.5 L27.2 161.0 L27.2 168.5 L32.2 176.0 L32.2 191.0 L31.0 203.5 M6.0 138.5 L11.0 146.0 L8.5 153.5 L16.0 156.0 L21.0 158.5 L27.2 162.2 M38.5 153.5 L57.2 154.8 L57.2 158.5 L74.8 159.8 L64.8 166.0 L66.0 181.0 L64.8 191.0 L49.8 192.2 L48.5 198.5 L31.0 198.5 M64.8 158.5 L64.8 131.0 L71.0 126.0 L69.8 116.0 L64.8 108.5 L61.0 106.0 M71.0 126.0 L81.0 133.5 L88.5 136.0 L108.5 136.0 L108.5 126.0 L109.8 106.0 M108.5 126.0 L142.2 127.2 L143.5 131.0 L149.8 131.0 M88.5 166.0 L88.5 176.0 L144.8 176.0 L144.8 149.8 M88.5 176.0 L88.5 198.5 L144.8 198.5 L144.8 176.0 M88.5 198.5 L87.2 209.0 M128.5 198.5 L128.5 209.0 M64.8 191.0 L88.5 191.0 M88.5 153.5 L101.0 153.5 L137.8 149.8 M74.8 159.8 L88.5 159.8 L88.5 166.0 M6.0 174.8 L32.2 176.0 M192.2 156.0 L203.5 153.5 L211.0 154.8 L214.8 159.8 L221.0 156.0 L227.2 149.8 L228.5 132.2 L201.0 131.0 M228.5 132.2 L243.5 131.0 L244.8 113.5 L251.0 111.0 L277.2 111.0 L277.2 106.0 M208.0 104.8 L213.5 111.0 L206.0 129.8 M244.8 131.0 L258.5 141.0 L266.0 142.2 L267.2 156.0 L278.5 161.0 L290.0 153.5 M266.0 142.2 L290.0 131.0 M227.2 149.8 L232.2 161.0 L246.0 166.0 L248.5 171.0 L236.0 177.2 L236.0 188.5 L234.8 198.5 L223.5 198.5 M214.8 159.8 L213.5 166.0 L208.5 168.5 L206.0 181.0 L204.8 191.0 L203.5 209.0 M178.5 186.0 L186.0 182.2 L196.0 181.0 L204.8 191.0 M246.0 166.0 L267.2 166.0 L269.8 176.0 L271.0 186.0 L278.5 193.5 L290.0 198.5 M271.0 186.0 L266.0 196.0 L256.0 198.5 L234.8 198.5 M277.2 111.0 L290.0 111.0 M187.2 93.5 L191.0 107.2 M290.0 29.8 L300.0 38.5 L308.8 43.5 L315.0 39.8 L322.5 33.5 L327.5 29.8 L325.0 21.0 L320.0 16.0 M308.8 43.5 L305.0 53.5 M327.5 29.8 L340.0 36.0 L350.0 43.5 L362.5 41.0 L365.0 33.5 L361.2 26.0 L365.0 18.5 L375.0 13.5 M350.0 43.5 L351.2 56.0 L362.5 56.0 L385.0 54.8 L395.0 53.5 L397.5 43.5 L393.8 36.0 L382.5 28.5 L376.2 21.0 M362.5 56.0 L365.0 71.0 L362.5 91.0 M385.0 54.8 L384.5 71.0 L385.0 91.0 M395.0 53.5 L407.5 58.5 L415.0 68.5 L420.0 78.5 L426.2 81.0 M415.0 68.5 L407.5 81.0 L403.8 91.0 M397.5 43.5 L410.0 38.5 L416.2 33.5 L425.0 28.5 L435.0 48.5 L442.5 51.0 M416.2 33.5 L415.0 21.0 L420.0 11.0 M425.0 28.5 L440.0 29.8 L452.5 31.0 L460.0 43.5 M440.0 29.8 L437.5 16.0 L442.5 8.5 M452.5 31.0 L465.0 23.5 L472.5 21.0 M435.0 48.5 L433.8 59.8 M442.5 68.5 L452.5 66.0 L460.0 71.0 L465.0 83.5 L470.0 92.2 M460.0 71.0 L472.5 66.0 L482.5 56.0 L480.0 46.0 L468.8 46.0 M482.5 56.0 L497.5 58.5 L505.0 64.8 L497.5 73.5 L492.5 81.0 L487.5 93.5 M480.0 46.0 L487.5 36.0 L507.5 21.0 L512.5 13.5 M497.5 28.5 L510.0 36.0 L520.0 43.5 L530.0 38.5 L540.0 31.0 L548.0 27.0 M505.0 64.8 L517.5 61.0 L530.0 63.5 L540.0 71.0 L548.0 67.8 M520.0 43.5 L522.5 53.5 L517.5 61.0 M540.0 71.0 L537.5 81.0 L540.0 94.0 M548.0 49.2 L545.0 48.5 L540.0 31.0 M290.0 81.0 L300.0 83.5 L310.0 89.8 M323.8 92.2 L327.5 106.0 L330.0 116.0 L343.8 116.0 L343.8 104.8 L342.5 92.2 M290.0 117.2 L300.0 118.5 L307.5 117.2 L317.5 123.5 L330.0 122.2 L330.0 116.0 M343.8 116.0 L362.5 114.8 L372.5 116.0 M362.5 92.2 L362.5 114.8 M317.5 123.5 L320.0 136.0 L318.8 148.5 L300.0 151.0 L298.8 166.0 M320.0 136.0 L347.5 137.2 L348.8 151.0 L347.5 158.5 M348.8 137.2 L365.0 136.0 M290.0 136.0 L300.0 137.2 L300.0 151.0 M437.5 93.5 L440.0 106.0 L442.5 116.0 L440.0 126.0 L445.0 136.0 M447.5 93.5 L446.2 106.0 L462.5 111.0 L475.0 111.0 L476.2 96.0 M475.0 111.0 L476.2 123.5 L475.0 136.0 L460.0 138.5 L450.0 153.5 M476.2 123.5 L500.0 124.8 L502.5 113.5 L501.2 106.0 L510.0 103.5 L522.5 104.8 L527.5 113.5 L528.8 123.5 L530.0 136.0 M500.0 124.8 L502.5 136.0 L530.0 136.0 L540.0 141.0 M522.5 104.8 L530.0 98.5 L540.0 97.2 L548.0 98.0 M548.0 124.7 L540.0 126.0 L528.8 123.5   M440.0 126.0 L425.0 123.5 L420.0 119.8 M450.0 153.5 L465.0 156.0 L470.0 166.0 L465.0 178.5 L467.5 191.0 L480.0 192.2 L490.0 186.0 L492.5 171.0 L490.0 156.0 L487.5 146.0 L475.0 136.0 M490.0 156.0 L505.0 153.5 L515.0 151.0 L522.5 161.0 L520.0 176.0 L525.0 186.0 L540.0 191.0 L547.5 187.2 M492.5 171.0 L502.5 178.5 L505.0 191.0 L500.0 203.5 L490.0 209.0 M515.0 151.0 L530.0 136.0 M540.0 141.0 L542.5 156.0 L548.0 163.3  M450.0 153.5 L450.0 168.5 L445.0 181.0 L430.0 178.5 L420.0 176.0 L415.0 181.0 L407.5 178.5 M445.0 181.0 L450.0 196.0 L452.5 209.0 M465.0 178.5 L450.0 181.0 M290.0 178.5 L297.5 181.0 L312.5 176.0 L332.5 178.5 L335.0 166.0 L347.5 158.5 L365.0 158.5 L370.0 151.0 L372.5 142.2 M332.5 178.5 L337.5 191.0 L335.0 203.5 L325.0 209.0 M365.0 158.5 L367.5 171.0 L372.5 181.0 L385.0 183.5 L390.0 178.5 L397.5 181.0 M372.5 181.0 L370.0 196.0 L362.5 209.0 M297.5 181.0 L300.0 196.0 L295.0 209.0 M312.5 176.0 L315.0 191.0 L317.5 203.5 L312.5 209.0 M337.5 191.0 L352.5 193.5 L370.0 196.0 M385.0 183.5 L387.5 198.5 L390.0 209.0 M415.0 181.0 L417.5 196.0 L425.0 209.0 M480.0 192.2 L485.0 203.5 L482.5 209.0 M525.0 186.0 L522.5 198.5 L527.5 209.0 M372.5 116.0 L375.0 126.0 L385.0 146.0 L386.2 149.8 M420.0 141.0 L417.5 156.0 L420.0 161.0 M290.0 43.5 L297.5 46.0 L300.0 38.5 M548.0 48.4 L554.5 43.5 L564.5 38.5 L572.0 31.0 L577.0 21.0 L574.5 13.5 L564.5 8.5  M548.0 61.2 L559.5 63.5 L568.2 71.0 L569.5 81.0 L564.5 91.0 M554.5 43.5 L562.0 48.5 L572.0 51.0 L584.5 56.0 L589.5 63.5 L587.0 71.0 L594.5 81.0 L597.0 93.5 M572.0 31.0 L587.0 28.5 L597.0 33.5 M577.0 21.0 L592.0 18.5 L602.0 13.5 L607.0 6.0 M604.5 49.8 L617.0 53.5 L627.0 48.5 L632.0 41.0 L642.0 36.0 L647.0 28.5 L642.0 21.0 L632.0 18.5 L622.0 11.0 M617.0 53.5 L619.5 66.0 L627.0 76.0 L622.0 86.0 L617.0 93.5 M627.0 76.0 L639.5 73.5 L649.5 68.5 L657.0 73.5 L667.0 68.5 L672.0 58.5 L669.5 48.5 L662.0 41.0 L642.0 36.0 M649.5 68.5 L652.0 81.0 L649.5 88.5 M672.0 58.5 L684.5 56.0 L694.5 51.0 L702.0 43.5 L707.0 33.5 L702.0 23.5 L682.0 13.5 L677.0 6.0 M662.0 41.0 L667.0 31.0 L677.0 26.0 L682.0 13.5 M647.0 28.5 L657.0 21.0 L662.0 11.0 L659.5 6.0 M707.0 33.5 L719.5 31.0 L729.5 23.5 L734.5 13.5 L732.0 6.0 M694.5 51.0 L699.5 59.8 M702.0 43.5 L714.5 46.0 M742.0 32.2 L747.0 43.5 L752.0 53.5 L762.0 51.0 L772.0 46.0 L777.0 38.5 M722.0 42.2 L727.0 53.5 L737.0 61.0 L734.5 71.0 L729.5 76.0 L734.5 86.0 L737.0 95.5 M737.0 61.0 L752.0 53.5 M734.5 71.0 L717.0 69.8 L707.0 73.5 L697.0 81.0 L692.0 88.5 L687.0 95.5 M707.0 56.0 L717.0 69.8 M762.0 51.0 L767.0 63.5 L762.0 73.5 L752.0 78.5 L742.0 81.0 L734.5 86.0 M767.0 63.5 L782.0 61.0 L792.0 56.0 L806.0 53.5 M782.0 61.0 L787.0 73.5 L797.0 81.0 L806.0 83.5 M762.0 73.5 L772.0 81.0 L782.0 86.0 L787.0 94.2 M772.0 46.0 L784.5 43.5 M548.0 99.3 L552.0 98.5 L559.5 106.0 L562.0 116.0 L554.5 126.0 L548.0 129.2 M559.5 106.0 L572.0 103.5 L587.0 101.0 L590.8 111.0 M562.0 116.0 L577.0 123.5 L587.0 131.0 L584.5 141.0 L589.5 151.0 L593.2 159.8 M587.0 131.0 L597.0 123.5 M548.0 141.5 L549.5 146.0 L552.0 157.2 M612.0 96.0 L622.0 116.0 L632.0 121.0 L642.0 116.0 L652.0 113.5 L657.0 106.0 L662.0 96.0 M622.0 116.0 L617.0 126.0 L609.5 131.0 L612.0 146.0 M632.0 121.0 L637.0 133.5 L632.0 141.0 L622.0 146.0 M637.0 133.5 L652.0 136.0 L662.0 131.0 L672.0 123.5 L682.0 118.5 L687.0 111.0 L697.0 106.0 L707.0 103.5 L714.5 97.2 M652.0 113.5 L657.0 123.5 L662.0 131.0 M672.0 123.5 L677.0 136.0 L684.5 146.0 L694.5 153.5 M682.0 118.5 L672.0 106.0 L677.0 96.0 M697.0 106.0 L702.0 116.0 L712.0 121.0 L722.0 123.5 L729.5 116.0 L737.0 111.0 L747.0 113.5 L757.0 108.5 L762.0 101.0 L772.0 96.0 M712.0 121.0 L714.5 136.0 L719.5 146.0 M729.5 116.0 L732.0 106.0 L727.0 97.2 M747.0 113.5 L752.0 123.5 L760.8 133.5 M762.0 101.0 L757.0 96.0 M667.0 138.5 L677.0 146.0 L697.0 166.0 L707.0 173.5 L714.5 178.5 L722.0 176.0 L732.0 178.5 L734.9 179.8 M722.0 176.0 L724.5 161.0 L722.0 149.8 M732.0 178.5 L737.0 166.0 L744.5 156.0 L748.2 146.0 L748.2 137.2 M744.5 156.0 L757.0 153.5 L767.0 156.0 L787.0 146.0 L797.0 148.5 L806.0 146.0 M767.0 156.0 L772.0 168.5 L769.5 178.5 M777.0 151.0 L774.5 138.5 L782.0 131.0 L792.0 128.5 L802.0 123.5 L806.0 124.8 M782.0 119.0 L792.0 128.5 M787.0 146.0 L792.0 161.0 L789.5 173.5 M548.0 160.8 L552.0 157.2 L562.0 166.0 L572.0 168.5 L582.0 161.0  M562.0 166.0 L566.5 179.5 M572.0 168.5 L579.5 178.5 L585.0 179.9 M591.8 179.9 L599.5 176.0 L602.0 166.0 L597.0 158.5  M602.0 166.0 L617.0 163.5 L629.5 166.0 L637.0 158.5 L632.0 148.5 L622.0 146.0 M629.5 166.0 L634.5 178.5 L634.9 180.0 M637.0 158.5 L649.5 156.0 L662.0 161.0 L667.0 153.5 L662.0 146.0 L652.0 143.5 L632.0 148.5 M662.0 161.0 L664.5 171.0 L662.0 178.5 M672.0 176.0 L672.7 179.5   M769.8 179.5 L769.5 178.5      M597.0 33.5 L604.5 41.0 L604.5 49.8 M584.5 56.0 L597.0 53.5 L604.0 56.0 M8.5 209.0 L8.5 230.2 M8.5 230.2 L21.0 234.0 L56.0 231.5 L59.8 226.5 L61.0 216.5 L63.5 209.0 M88.5 209.0 L88.5 237.8 L81.0 237.8 L69.8 239.0 L68.5 246.5 L64.8 247.8 M88.5 225.2 L128.5 225.2 L146.0 224.0 M128.5 209.0 L128.5 225.2 M31.0 234.0 L32.2 245.2 L39.8 246.0 M11.0 237.8 L11.0 269.0 L14.8 270.2 L14.8 282.8 M39.8 246.0 L41.0 254.0 L39.8 269.0 L46.0 276.5 L47.2 282.8 M6.0 282.8 L38.5 284.0 L47.2 282.8 L48.5 276.5 L68.5 277.8 L74.8 284.0 L83.5 294.0 L88.5 297.8 M64.8 247.8 L63.5 262.8 L58.5 271.5 L59.8 276.5 M81.0 246.5 L86.0 246.5 L83.5 260.2 L87.2 262.8 L87.2 284.0 L91.0 286.5 L86.0 309.0 L83.5 316.5 L78.5 319.0 L77.2 329.0 L82.2 331.5 M87.2 269.0 L122.2 270.2 M86.0 246.5 L136.0 246.5 M136.0 234.0 L136.0 246.5 M38.5 284.0 L38.5 309.0 L37.2 319.0 L21.0 319.0 L19.8 345.2 L18.5 381.5 L16.0 394.0 L8.5 399.0 M38.5 309.0 L46.0 314.0 L56.0 316.5 L59.8 326.5 L66.0 330.2 L78.5 331.5 M59.8 326.5 L51.0 329.0 L51.0 345.2 L19.8 345.2 M51.0 345.2 L58.5 346.5 L58.5 366.5 L57.2 381.5 L18.5 381.5 M58.5 366.5 L66.0 369.0 L74.8 369.0 M57.2 381.5 L57.2 412.0 M6.0 320.2 L21.0 319.0 M149.8 250.2 L151.0 259.0 L148.5 266.5 L151.0 276.5 L151.0 281.5 L143.5 282.8 L143.5 289.0 L136.0 290.2 L134.8 304.0 L133.5 314.0 L132.2 321.5 M151.0 259.0 L156.0 260.2 L166.0 265.2 M151.0 276.5 L166.0 277.8 L186.0 277.8 L186.0 259.0 L168.5 259.0 M186.0 241.5 L186.0 259.0 M186.0 277.8 L186.0 311.5 L156.0 312.8 L156.0 304.0 L151.0 301.5 M156.0 312.8 L156.0 321.5 L133.5 321.5 M186.0 311.5 L203.5 310.2 L222.2 311.5 L222.2 274.0 L218.5 274.0 L218.5 255.2 L214.8 254.0 L214.8 239.0 M186.0 277.8 L203.5 277.8 L218.5 281.5 M203.5 310.2 L202.2 339.0 L202.2 355.2 L203.5 375.2 L216.0 371.5 L223.5 369.0 L232.2 369.0 M222.2 311.5 L222.2 320.2 L231.0 320.2 L229.8 344.0 L227.2 345.2 L227.2 351.5 L202.2 355.2 M239.8 240.2 L238.5 254.0 L234.0 255.2 L234.0 272.8 L222.2 274.0 M234.0 272.8 L259.8 274.0 L258.5 281.5 L253.5 294.0 L222.2 294.0 M253.5 241.5 L253.5 250.2 L259.8 251.5 L259.8 274.0 M259.8 259.0 L290.0 260.2 M253.5 294.0 L253.5 320.2 L231.0 320.2 M258.5 281.5 L274.8 281.5 L274.8 319.0 L262.2 320.2 L253.5 320.2 M274.8 285.2 L290.0 285.2 M262.2 320.2 L262.2 344.0 L246.0 345.2 L238.5 351.5 L238.5 365.2 L232.2 369.0 L233.5 389.0 L216.0 390.2 L216.0 412.0 M229.8 344.0 L246.0 345.2 M262.2 344.0 L277.2 356.5 L279.8 369.0 L264.8 371.5 L264.8 365.2 L238.5 365.2 M277.2 356.5 L290.0 354.0 M264.8 371.5 L264.8 389.0 L233.5 389.0 M264.8 389.0 L290.0 389.0 M253.5 389.0 L253.5 412.0 M132.2 321.5 L117.2 329.0 L116.0 316.5 L103.5 316.5 M117.2 329.0 L116.0 361.5 L109.8 362.8 L109.8 391.5 L122.2 392.8 L124.8 386.5 L132.2 387.8 L132.2 345.2 L153.5 345.2 L156.0 339.0 L171.0 337.8 L172.2 314.0 M132.2 345.2 L132.2 321.5 M116.0 361.5 L88.5 361.5 M109.8 369.0 L81.0 369.0 M109.8 391.5 L98.5 392.8 L98.5 412.0 M113.5 394.0 L116.0 404.0 L113.5 412.0 M153.5 345.2 L156.0 356.5 L156.0 379.0 L151.0 381.5 L142.2 382.8 L141.0 399.0 L133.5 406.5 L133.5 412.0 M156.0 356.5 L202.2 355.2 M171.0 337.8 L178.5 339.0 L202.2 339.0 M142.2 382.8 L156.0 386.5 L181.0 395.2 L186.0 391.5 L192.2 390.2 L192.2 380.2 L183.5 379.0 M186.0 391.5 L184.8 401.5 L181.0 412.0 M192.2 390.2 L206.0 390.2 L206.0 375.2 M206.0 390.2 L216.0 390.2 M226.0 209.0 L225.5 237.8 M256.0 209.0 L256.0 237.8 M193.5 209.0 L192.2 224.0 L192.2 237.8 M142.2 351.5 L148.5 350.2 L149.8 354.0 L144.8 355.2 M222.2 369.0 L203.5 375.2 M315.0 209.0 L315.0 237.8 M345.0 209.0 L346.2 237.8 M372.5 209.0 L373.8 224.0 L372.5 237.8 M400.0 209.0 L401.2 237.8 M436.2 209.0 L435.0 224.0 L437.5 237.8 M473.8 209.0 L473.8 237.8 M440.0 224.0 L455.0 219.0 L465.0 214.0 L470.0 209.0 M507.5 209.0 L510.0 221.5 L507.5 234.0 M306.2 247.8 L315.0 249.0 L320.0 255.2 L327.5 259.0 L340.0 260.2 L350.0 259.0 L360.0 254.0 L367.5 260.2 M350.0 259.0 L350.0 299.0 M290.0 275.2 L303.8 275.2 L350.0 276.5 L382.5 275.2 M396.2 276.5 L407.5 277.8 L412.5 275.2 L417.5 277.8 L421.2 276.5 L422.5 282.8 L430.0 284.0 L437.5 279.0 L440.0 274.0 L452.5 273.5 L453.8 281.5 L456.2 284.0 M421.2 282.8 L421.2 300.2 L380.0 299.5 L341.2 300.2 L300.0 299.0 M380.0 275.2 L380.0 299.5 M440.0 239.0 L437.5 254.0 L437.5 273.5 M456.2 284.0 L465.0 281.5 L475.0 274.0 L485.0 269.0 L495.0 261.5 M456.2 284.0 L456.2 309.0 L475.0 309.0 M421.2 300.2 L428.8 304.0 L433.8 311.5 L440.0 319.0 L437.5 329.0 L432.5 334.0 L436.2 339.0 M428.8 304.0 L422.5 311.5 L401.2 332.8 M440.0 319.0 L450.0 311.5 L456.2 309.0 M475.0 309.0 L480.0 319.0 L482.5 326.5 L475.0 331.5 L470.0 334.0 L462.5 339.0 L457.5 345.2 L455.0 349.6 M482.5 326.5 L497.5 331.5 L498.8 337.8 L490.0 341.5 L490.0 361.5 M341.2 300.2 L341.2 327.8 L318.8 327.8 L318.8 369.0 L327.5 370.2 M300.0 322.8 L315.0 322.8 L318.8 327.8 M341.2 327.8 L372.5 327.8 L377.5 331.5 L382.5 339.0 L388.8 341.5 L395.0 339.0 L401.2 332.8 M350.0 327.8 L350.0 347.8 L357.5 349.0 L357.5 349.5 M349.5 364.0 L342.5 364.0 L340.0 369.0 L327.5 370.2 L326.2 412.0 M357.5 349.0 L375.0 349.0 L376.2 349.8 M384.6 349.8 L388.8 341.5   M407.5 349.0 L408.2 349.7 M437.5 329.0 L450.0 334.0 L455.0 341.5 M470.0 334.0 L475.0 344.0 L477.5 354.0 L490.0 352.8 M498.8 337.8 L510.0 336.5 M470.5 368.8 L480.0 365.2  M470.5 384.0 L490.0 384.0 L490.0 364.0 M490.0 384.0 L490.0 412.0  M490.0 372.8 L516.2 372.8   M290.0 369.0 L318.8 369.0 M522.5 242.8 L521.2 254.0 L532.5 255.2 L533.8 271.5 L545.0 271.5 L547.5 266.5 M525.0 266.5 L533.8 271.5 M533.8 271.5 L532.5 291.5 L540.0 292.8 M505.0 294.0 L522.5 294.0 L532.5 291.5 M545.0 271.5 L548.0 271.7   M537.5 240.2 L540.0 254.0 L548.0 258.0 M510.0 319.0 L533.8 319.0 L533.8 307.8 L539.9 307.8 M533.8 319.0 L535.0 339.0 L539.5 339.6 M510.0 336.5 L535.0 339.0   M516.2 372.8 L539.5 371.5 M543.5 380.2 L545.0 384.0 L548.0 383.2 M545.0 384.0 L545.0 399.0 L537.5 401.5 L525.0 401.5 L520.0 402.8  M545.0 399.0 L548.0 399.8 M290.0 351.5 L300.0 351.5 L318.8 352.8 M300.0 299.0 L297.5 322.8 M405.0 259.0 L403.8 276.5    M549.5 241.5 L548.2 254.0 L548.0 254.1 M565.8 240.2 L563.2 276.5 L564.5 291.5 M564.5 259.0 L579.5 251.5 L592.0 254.0 L602.0 246.5 L599.5 240.2 M602.0 246.5 L604.5 256.5 L599.5 266.5 L594.5 274.0 L587.0 276.5 L563.2 276.5 M627.0 240.2 L624.5 249.0 L629.5 256.5 L622.0 261.5 L622.0 271.5 L617.0 279.0 L609.5 281.5 L599.5 279.0 L594.5 274.0 M629.5 256.5 L639.5 261.5 L647.0 271.5 L642.0 279.0 L639.5 289.0 L632.0 294.0 M639.5 261.5 L647.0 251.5 L642.0 241.5 M647.0 271.5 L659.5 274.0 L667.0 270.2   M564.5 291.5 L585.8 292.8 L587.0 284.0 L587.0 276.5 M585.8 292.8 L592.0 299.0 L592.1 299.5  M564.5 291.5 L563.9 299.5     M632.0 294.0 L647.0 304.0 L654.5 299.0 L659.5 291.5 L657.0 284.0 L647.0 281.5 L642.0 279.0 M647.0 304.0 L657.0 311.5 L659.5 319.0 M640.5 321.9 L642.0 321.5 L649.5 326.5 L659.5 319.0 L667.0 314.0 L677.0 309.0 L679.5 301.5 L672.0 294.0 L659.5 291.5  M640.2 338.1 L647.0 341.5 L657.0 336.5 L667.0 334.0 L667.0 314.0  M647.0 341.5 L649.5 351.5 L659.5 359.0 L667.0 369.0 M657.0 336.5 L662.0 349.0 L672.0 351.5 L682.0 349.0 L687.0 339.0 L694.5 334.0 L707.0 329.0 L714.5 326.5 M677.0 309.0 L687.0 319.0 L707.0 329.0 M682.0 349.0 L684.5 361.5 L682.0 369.0 M694.5 334.0 L702.0 344.0 L712.0 349.0 L722.0 351.5 L729.5 344.0 M712.0 349.0 L714.5 361.5 L722.0 371.5 M679.5 239.0 L692.0 241.5 L696.4 238.2 M692.0 241.5 L694.5 254.0 L702.0 264.0 L697.0 274.0 L689.5 281.5 M702.0 264.0 L717.0 259.0 L724.5 254.0 L722.0 241.5 L720.4 238.3 M724.5 254.0 L729.5 266.5 L728.2 281.5 L732.0 294.0 L737.0 296.5 M729.5 266.5 L744.5 259.0 L752.0 264.0 L762.0 259.0 M744.5 259.0 L744.5 238.5 M697.0 284.0 L707.0 296.5 L722.0 289.0 L728.2 281.5 M707.0 296.5 L709.5 309.0 M737.0 296.5 L744.5 304.0 L742.0 314.0 L734.5 321.5 L722.0 324.0 L717.0 329.0 M737.0 296.5 L747.0 291.5 L762.0 289.0 L772.0 294.0 L782.0 289.0 L792.0 291.5 L806.0 294.0 M744.5 304.0 L757.0 309.0 L762.0 319.0 L772.0 324.0 L784.5 321.5 L794.5 326.5 L806.0 329.0 M762.0 289.0 L767.0 279.0 L777.0 274.0 M772.0 294.0 L769.5 304.0 L772.0 324.0 M782.0 289.0 L787.0 279.0 L797.0 274.0 L806.0 276.5 M757.0 241.5 L762.0 249.0 L772.0 251.5 L782.0 246.5 L792.0 249.0 L806.0 246.5 M772.0 251.5 L774.5 264.0 L784.5 269.0 L797.0 274.0 M734.5 321.5 L739.5 331.5 L749.5 334.0 L752.0 344.0 L747.0 354.0 M749.5 334.0 L762.0 331.5 L772.0 324.0 M752.0 344.0 L767.0 346.5 L777.0 341.5 L787.0 344.0 L797.0 339.0 L806.0 341.5 M767.0 346.5 L769.5 359.0 L764.5 369.0 M787.0 344.0 L792.0 356.5 L787.0 369.0 L782.0 379.0 L772.0 384.0 L768.2 386.5 M792.0 356.5 L806.0 359.0  M548.0 384.0 L564.5 384.0 L574.5 389.0 L577.0 399.0 L567.0 406.5 L559.5 412.0 M564.5 384.0 L565.2 380.5 M597.7 380.1 L597.0 381.5 L584.5 384.0 L574.5 389.0 M622.4 380.5 L624.5 389.0 L617.0 399.0 L607.0 401.5 L597.0 399.0 L594.5 412.0 M640.5 377.1 L647.0 376.5 L647.0 394.0 L644.5 412.0 M647.0 376.5 L662.0 374.0 L667.0 369.0 L682.0 369.0 L687.0 379.0 L684.5 389.0 L674.5 394.0 L672.0 406.5 L669.5 412.0 M647.0 394.0 L674.5 394.0 M687.0 379.0 L702.0 381.5 L712.0 374.0 L722.0 371.5 L732.0 374.0 M702.0 381.5 L704.5 394.0 L697.0 404.0 L694.5 412.0 M732.0 386.5 L722.0 391.5 L712.0 399.0 L707.0 406.5 L704.5 412.0 M722.0 391.5 L732.0 399.0 L742.0 409.0 L747.0 412.0 M742.0 369.0 L762.0 349.0 M782.0 379.0 L792.0 389.0 L806.0 384.0  M682.0 241.5 L679.5 254.0 L687.0 261.5 M667.0 239.0 L664.5 249.0  M640.0 364.9 L647.0 376.5 M6.0 510.8 L17.2 510.8 L16.0 537.0 L6.0 538.2 M17.2 510.8 L28.5 512.0 L33.5 517.0 L43.5 514.5 L46.0 507.0 L49.8 512.0 L51.0 522.0 L49.8 529.5 M11.0 419.5 L13.5 432.0 L21.0 442.0 L23.5 449.5 L21.0 457.0 L31.0 459.5 M23.5 449.5 L36.0 452.0 L47.2 453.2 L48.5 442.0 L63.5 422.0 L66.0 415.8 M47.2 453.2 L56.0 458.2 L68.5 457.0 L78.5 458.2 M56.0 458.2 L54.8 469.5 L52.2 477.0 L53.5 487.0 L52.2 497.0 L49.8 512.0 M6.0 474.5 L18.5 473.2 L33.5 472.0 L43.5 468.2 L54.8 469.5 M21.0 489.5 L41.0 484.5 L53.5 487.0 M21.0 489.5 L31.0 509.5 M6.0 557.0 L11.0 562.0 L18.5 564.5 L21.0 572.0 L31.0 574.5 L41.0 572.0 M31.0 552.0 L28.5 557.0 L31.0 562.0 M33.5 594.5 L32.2 607.0 L31.3 613.0 M94.8 412.0 L96.0 427.0 L94.8 445.8 L111.0 447.0 L113.5 432.0 M94.8 445.8 L102.2 454.5 L101.0 464.5 L93.5 465.8 M117.2 412.0 L117.2 423.2 L131.0 423.2 L131.0 415.8 L146.0 418.2 L161.0 424.5 L184.8 423.2 L186.0 412.0 M102.2 454.5 L116.0 454.5 L131.0 462.0 L133.5 473.2 M123.5 458.2 L131.0 452.0 L141.0 444.5 L151.0 443.2 L158.5 444.5 M158.5 444.5 L166.0 454.5 L178.5 453.2 L183.5 454.5 L186.0 472.0 L186.0 499.5 M111.0 474.5 L113.5 484.5 L112.2 499.5 L144.8 500.0 L161.0 500.8 L186.0 499.5 L191.0 502.0 L191.0 523.2 M112.2 499.5 L111.0 524.5 L111.0 539.5 L81.0 540.0 L79.8 562.0 M111.0 524.5 L88.5 519.5 L78.5 515.8 M111.0 532.0 L131.0 533.2 L146.0 530.8 L166.0 527.0 L191.0 523.2 L211.0 523.2 L246.0 520.8 L278.5 515.8 M146.0 530.8 L147.2 562.0 L163.5 563.2 M111.0 539.5 L118.5 540.8 L118.5 562.0 L79.8 562.0 M118.5 562.0 L147.2 562.0 M166.0 527.0 L167.2 542.0 L178.5 555.8 L181.0 558.2 L163.5 559.5 L163.5 577.0 L171.0 584.5 L178.5 584.5 L178.5 594.0 M184.8 527.0 L184.8 539.5 L191.0 544.5 L196.0 548.2 L197.2 554.5 L181.0 555.8 M197.2 554.5 L281.0 554.5 M211.0 523.2 L211.0 554.5 M246.0 520.8 L244.8 554.5 M184.8 423.2 L186.0 453.2 L217.2 454.0 L247.2 453.2 L283.5 454.5 M217.2 412.0 L217.2 454.0 L216.0 487.0 L216.0 523.2 M247.2 453.2 L247.2 520.8 M186.0 485.8 L247.2 485.8 L279.8 484.5 M238.5 423.2 L256.0 422.0 L271.0 423.2 L286.0 422.0 M206.0 554.5 L206.0 563.2 L213.5 563.2 M229.8 557.0 L229.8 602.0 L252.2 600.8 L252.2 555.8 M252.2 584.5 L282.2 584.5 M229.8 602.0 L216.0 603.2 L216.0 613.0 M191.0 562.0 L192.2 584.5 L191.0 594.0 M87.2 564.5 L87.2 594.0 M124.8 563.2 L126.0 594.0 M147.2 563.2 L146.0 594.0 M51.0 559.5 L63.5 562.0 L79.8 562.0 M68.5 532.0 L72.2 537.0 L81.0 540.0 M252.2 600.8 L252.2 613.0 M77.2 597.0 L73.5 607.0 L71.6 613.0 M102.2 595.8 L102.2 613.0 M141.0 595.8 L143.5 607.0 L145.4 613.0 M161.0 424.5 L156.0 434.5 L151.0 443.2 M33.5 517.0 L31.0 527.0 L38.5 532.0 L36.0 542.0 L41.0 552.0 M6.0 437.0 L13.5 432.0 M351.2 446.3 L351.2 477.0 L357.5 482.0 L365.0 489.5 L375.0 500.8 L396.2 500.8 L397.5 508.2 L397.5 539.5 L400.0 547.0 L411.2 548.2 M386.3 446.5 L386.2 447.0 L380.0 462.0 L357.5 462.0 L351.2 477.0  M386.2 447.0 L395.0 448.2 L397.5 462.0 L402.5 472.0 L400.0 479.5 L396.2 484.5 L396.2 500.8 M402.5 472.0 L410.0 470.8 L417.5 472.0 L426.2 474.5 L428.8 482.0 M432.5 446.5 L432.5 469.5 L440.0 472.0 M470.2 438.3 L471.2 438.2 L471.2 462.0 L465.0 465.8 L450.0 462.0 L442.5 464.5  M471.2 449.5 L487.5 442.0 L500.0 443.2 L510.0 449.5 M493.8 412.0 L493.8 442.0 M471.2 462.0 L477.5 460.8 L478.8 453.2 L490.0 455.8 L505.0 462.0 L505.0 507.0 L497.5 504.5 L490.0 514.5 L486.2 524.5 L483.8 537.0 M465.0 479.5 L472.5 484.5 L505.0 484.5 M465.0 479.5 L463.8 508.2 L450.0 509.5 L450.0 539.5 L480.0 539.5 L507.5 538.2 M433.8 484.5 L433.8 508.2 L396.2 508.2 M433.8 508.2 L440.0 500.8 L441.2 508.2 L450.0 509.5 M463.8 499.5 L470.0 500.8 L472.5 509.5 L480.0 509.5 L480.0 515.8 L490.0 514.5 M430.0 509.5 L430.0 537.0 L426.2 537.0 L426.2 548.2 L411.2 548.2 L411.2 569.5 L406.2 570.8 L406.2 578.2 L411.2 578.2 L411.2 594.0 M433.8 548.2 L435.0 554.5 L442.5 548.2 L443.8 554.5 L450.0 555.8 M450.0 539.5 L450.0 594.0 M450.0 577.0 L480.0 577.0 L501.2 575.8 L501.2 594.0 M480.0 539.5 L480.0 577.0 M507.5 538.2 L507.5 564.5 L530.0 565.8 M505.0 492.0 L520.0 493.2 L526.2 499.5 M505.0 462.0 L531.2 463.2 L537.5 458.2 M290.0 459.5 L300.0 457.0 L310.0 449.5 L311.2 437.0 L305.0 427.0 L301.2 419.5 L302.5 412.0 M310.0 449.5 L322.5 454.5 L330.0 449.5 L333.8 454.5 M322.5 454.5 L325.0 462.0 L351.2 463.2 M290.0 477.0 L315.0 477.0 L320.0 479.5 L315.0 487.0 L310.0 497.0 L307.5 505.8 L340.0 507.0 L342.5 519.5 L351.2 520.8 L351.2 532.0 L347.5 537.0 L346.2 549.5 L350.0 552.0 M340.0 507.0 L342.5 494.5 L351.2 487.0 L351.2 477.0 M351.2 520.8 L397.5 520.8 M290.0 532.0 L302.5 532.0 L307.5 519.5 L307.5 505.8 M307.5 537.0 L317.5 547.0 L322.5 557.0 L320.0 572.0 L317.5 584.5 L320.0 597.0 L315.0 607.0 M322.5 557.0 L335.0 562.0 L343.8 572.0 L343.8 594.0 M335.0 562.0 L350.0 557.0 L362.5 550.8 L375.0 547.0 L390.0 532.0 L397.5 529.5 M343.8 572.0 L406.2 572.0 M290.0 582.0 L317.5 584.5 M433.8 595.8 L434.9 613.0 M460.0 595.8 L460.0 613.0 M405.0 595.8 L405.0 613.0 M373.8 595.8 L365.0 602.0 L360.8 613.0 M502.5 595.8 L495.0 607.0 L493.1 613.0 M545.0 484.5 L548.0 484.5 M548.0 512.0 L543.8 512.0  M542.5 512.0 L542.5 537.0 L548.0 538.4   M533.8 572.0 L543.8 572.0 L543.8 587.0 L548.0 587.4 M543.8 572.0 L548.0 571.8 M548.0 427.0 L526.2 428.2  M540.0 465.8 L548.0 470.8 M537.5 444.5 L548.0 444.5 M548.0 415.0 L548.2 412.0 M548.0 445.0 L548.2 449.5 L548.0 449.5 M548.2 449.5 L563.2 450.8 L564.5 457.0 L582.0 457.0 L583.2 444.5 L589.5 439.5 L604.5 449.5 L608.2 455.8 M573.2 412.0 L574.5 427.0 L579.5 429.5 L589.5 439.5 M574.5 427.0 L602.0 417.0 L603.2 412.0 M602.0 417.0 L608.2 427.0 L619.5 429.5 L627.0 422.0 M608.2 427.0 L604.5 437.0 L604.5 449.5 M564.5 457.0 L564.5 487.0 L548.0 485.8 M564.5 487.0 L565.8 512.0 L548.0 512.0 M548.0 538.4 L552.0 539.5 L553.2 554.5 L564.5 555.8 L564.5 572.0 L548.0 572.0 M548.0 587.4 L557.0 588.2 M582.0 457.0 L582.0 477.0 L594.5 479.5 L597.0 489.5 L609.5 489.5 L617.0 502.0 L618.2 512.0 L589.5 513.2 L565.8 512.0 M594.5 479.5 L594.5 467.0 L607.0 462.0 L622.0 464.5 L624.5 469.5 M589.5 513.2 L590.8 537.0 L552.0 539.5 M590.8 537.0 L612.0 537.0 L612.0 522.0 L618.2 512.0 M578.2 539.5 L580.8 554.5 L564.5 555.8 M580.8 554.5 L612.0 553.2 L612.0 537.0 M612.0 553.2 L613.2 564.5 L613.2 587.0 L573.2 587.0 L557.0 588.2 M573.2 587.0 L584.5 572.0 L597.0 562.0 L613.2 564.5 M584.5 588.2 L584.5 613.0 M613.2 564.5 L632.0 564.5 L647.0 565.8 L648.2 587.0 L632.0 589.5 L632.0 613.0 M613.2 587.0 L632.0 589.5 M627.0 523.2 L627.0 537.0 L639.5 538.2 M642.0 468.2 L642.0 522.0 L627.0 523.2 M632.0 479.5 L642.0 479.5 M642.0 494.5 L664.5 494.5 L665.8 482.0 L658.2 484.5 L644.5 470.8 M642.0 522.0 L664.5 519.5 L672.0 517.0 L665.8 507.0 L664.5 494.5 M664.5 519.5 L667.0 534.5 L674.5 535.8 L677.0 527.0 L687.0 524.5 L687.0 534.5 L682.0 547.0 L677.0 552.0 L658.2 553.2 L658.2 562.0 L652.0 567.0 M677.0 552.0 L682.0 562.0 L682.0 577.0 L674.5 579.5 L675.8 597.0 L687.0 598.2 L688.1 613.0 M682.0 577.0 L709.5 578.2 L709.5 572.0 L714.5 569.5 L714.5 542.0 L715.8 534.5 L698.2 534.5 L699.5 522.0 L687.0 524.5 M715.8 534.5 L723.2 534.5 L722.0 519.5 L729.5 509.5 L722.0 507.0 L712.0 512.0 L699.5 522.0 M672.0 517.0 L682.0 507.0 L692.0 494.5 L702.0 487.0 L707.0 477.0 L729.5 473.2 M692.0 494.5 L682.0 477.0 L677.0 464.5 L669.5 457.0 L649.5 444.5 L644.5 437.0 M657.0 424.5 L677.0 464.5 M682.0 412.0 L687.0 427.0 L689.5 437.0 L702.0 434.5 L712.0 437.0 L722.0 434.5 L729.5 437.0 L739.5 427.0 L737.0 412.0 M689.5 437.0 L697.0 449.5 L692.0 459.5 M712.0 437.0 L717.0 449.5 L714.5 459.5 L719.5 467.0 M729.5 437.0 L734.5 449.5 L747.0 444.5 L757.0 437.0 L752.0 424.5 L759.5 419.5 L772.0 422.0 L787.0 414.5 M757.0 437.0 L767.0 444.5 L772.0 454.5 L762.0 457.0 L754.5 455.8 L747.0 462.0 L744.5 472.0 M772.0 454.5 L784.5 452.0 L794.5 449.5 L799.5 437.0 L797.0 427.0 M729.5 473.2 L729.5 509.5 M714.5 482.0 L714.5 509.5 M729.5 473.2 L742.0 477.0 L747.0 487.0 L745.8 499.5 L747.0 508.2 M747.0 487.0 L759.5 482.0 L762.0 492.0 L772.0 494.5 L782.0 489.5 L794.5 492.0 L806.0 494.5 M759.5 482.0 L764.5 469.5 L772.0 467.0 M729.5 509.5 L747.0 508.2 L757.0 517.0 L762.0 522.0 L772.0 512.0 L777.0 502.0 L782.0 489.5 M757.0 517.0 L752.0 532.0 L750.8 547.0 L742.0 549.5 L729.5 557.0 L732.0 567.0 L742.0 574.5 L754.5 572.0 L759.5 567.0 M750.8 547.0 L759.5 552.0 L762.0 559.5 L759.5 567.0 M722.0 519.5 L732.0 534.5 L742.0 542.0 L742.0 549.5 M714.5 552.0 L729.5 557.0 M742.0 574.5 L747.0 587.0 L752.0 592.0 L764.5 593.2 M709.5 578.2 L717.0 587.0 L722.0 597.0 L724.2 613.0 M722.0 597.0 L729.5 594.5 L752.0 593.2 M729.5 594.5 L729.5 613.0 M772.0 512.0 L792.0 522.0 L799.5 532.0 L806.0 534.5 M762.0 522.0 L769.5 532.0 L779.5 542.0 L784.5 552.0 L789.5 559.5 M792.0 494.5 L787.0 504.5 L782.0 517.0 M794.5 449.5 L806.0 454.5 M652.0 567.0 L654.5 577.0 L662.0 582.0 L665.8 592.0 L662.0 602.0 L664.1 613.0 M648.2 587.0 L653.2 587.0     M629.5 444.5 L634.5 452.0 L642.0 457.0 L642.0 468.2 M647.0 444.5 L652.0 457.0 L658.2 469.5 M658.2 562.0 L647.0 565.8 M35.7 613.0 L34.8 624.0 L37.2 639.0 L43.5 646.5 M34.8 624.0 L21.0 626.5 L16.0 634.0 M54.2 613.0 L56.0 624.0 L66.0 626.5 L71.0 634.0 L68.5 644.0 M81.7 613.0 L83.5 624.0 L93.5 629.0 L92.2 641.5 M102.2 613.0 L102.2 624.0 L123.5 625.2 L124.4 613.0 M102.2 624.0 L93.5 629.0 M147.2 613.0 L147.2 624.0 L166.0 624.0 L178.5 625.2 M147.2 624.0 L147.2 641.5 L148.5 659.0 L146.0 674.0 L146.0 689.0 L156.0 691.5 M123.5 625.2 L124.8 640.2 M166.0 624.0 L166.0 649.0 M214.8 613.0 L214.8 626.5 L248.5 626.5 L248.5 613.0 M214.8 626.5 L214.8 650.2 M248.5 626.5 L248.5 644.0 M248.5 616.5 L284.2 616.5 M43.5 646.5 L46.0 659.0 L56.0 661.5 L58.5 674.0 L51.0 681.5 M21.0 659.0 L23.5 671.5 L43.5 681.5 M58.5 674.0 L73.5 679.0 L81.0 671.5 L91.0 669.0 L96.0 661.5 M73.5 679.0 L76.0 691.5 L88.5 696.5 L101.0 691.5 L106.0 686.5 L116.0 689.0 L116.0 674.0 L111.0 670.2 M88.5 696.5 L91.0 709.0 L83.5 719.0 L73.5 724.0 M101.0 691.5 L106.0 704.0 L116.0 714.0 L136.0 739.0 M116.0 689.0 L131.0 691.5 L141.0 694.0 L146.0 689.0 M131.0 691.5 L133.5 704.0 L141.0 709.0 M156.0 691.5 L161.0 704.0 L158.5 714.0 L153.5 721.5 M161.0 684.0 L171.0 689.0 L178.5 684.0 M6.0 684.0 L16.0 686.5 L23.5 671.5 M43.5 646.5 L31.0 649.0 L21.0 659.0 L6.0 661.5 M71.0 634.0 L81.0 636.5 L92.2 641.5 M6.0 634.0 L16.0 634.0 M313.0 613.0 L313.8 619.0 M368.0 613.0 L368.8 619.0 L372.5 629.0 L373.8 636.5 M405.0 613.0 L405.0 646.5 M433.9 613.0 L434.5 636.5 M460.4 613.0 L461.2 620.2 L473.8 620.2 L475.0 629.0 L470.0 636.5 L473.8 644.0 L465.0 646.5 L465.0 656.5 M493.5 613.0 L493.8 614.0 L502.5 614.0 L505.0 620.2 L505.0 634.0 L502.5 644.0 M473.8 620.2 L505.0 620.2 M505.0 634.0 L510.0 634.0 L510.0 684.0 M510.0 634.0 L525.0 630.2 L540.0 629.0 L548.0 628.0 M540.0 629.0 L540.0 641.5 L533.8 649.0 L527.5 674.0 L531.2 684.0 L537.5 684.0 M510.0 665.2 L530.0 665.2 M537.5 684.0 L537.5 704.0 L525.0 709.0 M537.5 684.0 L548.0 683.6    M584.5 624.0 L584.5 636.5 L575.8 641.5 L559.5 646.5 L557.0 659.0 L562.0 669.0 L559.5 681.5 M607.0 625.2 L607.0 659.0 L605.8 671.5 M559.5 659.0 L584.5 660.2 L607.0 659.0 M632.0 626.5 L632.0 641.5 L627.0 651.5 L619.5 659.0 L614.5 671.5 M632.0 641.5 L654.5 642.8 M650.8 627.8 L652.0 659.0 L659.5 661.5 L659.5 704.0 L658.2 714.0 M675.8 629.0 L677.0 641.5 L669.5 651.5 L668.2 666.5 L672.0 674.0 L682.0 681.5 L687.0 691.5 L684.5 699.0 L692.0 699.0 L687.0 719.0 L692.0 719.0 M702.0 631.0 L707.0 641.5 L712.0 646.5 L709.5 655.2 M727.0 632.0 L727.0 671.5 L757.0 671.5 L757.0 659.0 M702.0 659.0 L702.0 689.0 L712.0 696.5 L713.2 722.8 L730.8 724.0 L730.8 752.8 L722.0 754.0 L722.0 774.0 L739.5 775.2 L742.0 781.5 M727.0 671.5 L719.5 684.0 L714.5 691.5 L712.0 696.5 M757.0 671.5 L757.0 706.5 L744.5 707.8 L729.5 704.0 L722.0 701.5 L714.5 696.5 M749.5 674.0 L742.0 684.0 L737.0 689.0 M757.0 706.5 L767.0 706.5 L779.5 704.0 M747.0 734.0 L762.0 727.8 L774.5 726.5 L782.0 729.0 M747.0 734.0 L744.5 744.0 M692.0 719.0 L713.2 720.2 M692.0 719.0 L687.0 734.0 L682.0 744.0 L679.5 751.5 M730.8 752.8 L762.0 752.8 L762.0 727.8 M762.0 752.8 L772.0 759.0 L784.5 756.5 M787.0 756.5 L787.0 779.0 L762.0 779.0 L762.0 752.8 M739.5 775.2 L762.0 776.5 M787.0 769.0 L806.0 759.0 M705.8 769.0 L714.5 771.5 L722.0 769.0 M659.5 704.0 L672.0 706.5 L684.5 699.0  M548.0 682.8 L559.5 681.5  M797.0 674.0 L806.0 679.0 M757.0 659.0 L772.0 646.5 L779.5 639.0 M797.0 714.0 L806.0 716.5 M350.0 354.1 L357.7 354.1 L357.7 361.8 L365.4 364.2 L367.7 371.3 L363.0 373.6 L371.3 380.7 L373.6 385.5 L379.6 390.2 L384.3 392.6 M387.8 350.0 L385.5 354.7 L381.9 359.5 L374.8 364.2 L376.0 367.7 L367.7 371.3 M384.3 392.6 L387.8 394.9 L387.8 400.8 L391.4 403.2 L392.0 407.9 L396.1 411.5 L398.5 410.9 L398.5 430.4 L387.8 431.0 L387.2 446.0 M398.5 410.9 L417.4 410.9 L423.3 414.4 M423.3 414.4 L425.7 407.9 L428.0 405.6 L426.9 400.8 L430.4 396.1 L429.2 392.6 L436.3 390.2 L437.5 381.9 M425.7 407.9 L462.3 407.3 L462.3 438.1 L432.8 438.7 L432.2 446.0 M350.0 415.0 L365.4 415.0 L365.4 406.8 L367.7 400.8 M350.0 426.9 L357.7 426.9 L357.7 416.2 M357.7 426.9 L365.4 427.4 L366.0 431.6 L387.8 431.0 M353.5 446.0 L353.5 431.6 L357.7 426.9 M410.3 446.0 L410.3 442.2 L432.8 441.6 M437.5 381.9 L432.8 376.0 L428.0 373.6 L425.7 367.7 L419.8 372.5 L415.0 373.6 L411.5 378.4 M450.5 406.8 L450.5 399.7 L454.0 397.3 L454.6 390.2 L463.5 389.0 L464.7 383.1 L470.0 381.9 M462.3 407.3 L470.0 406.8 M446.9 354.7 L450.5 356.5 L450.5 363.0 M452.9 354.7 L458.8 355.9 L462.3 360.6 L463.5 365.4 M462.3 438.1 L470.0 438.1 M540.0 319.7 L557.7 320.2 L581.4 320.2 M563.6 300.0 L563.6 319.7 M557.7 320.2 L558.2 331.5 L559.2 343.3 L566.6 344.8 L567.6 347.3 M540.0 345.3 L544.9 346.3 L559.2 343.3 M544.9 346.3 L544.4 365.0 L550.8 365.5 L550.8 370.9 L545.9 374.9 L542.0 378.8 M593.2 300.0 L592.2 315.8 L595.2 318.7 L603.1 321.7 L604.0 315.8 L607.0 312.8 M581.4 320.2 L581.4 317.7 L585.3 311.8 L591.2 310.3 M581.4 320.2 L583.3 327.6 L584.3 329.6 L579.4 334.5 M586.3 330.5 L586.3 358.1 M586.3 329.6 L589.3 329.6 L595.2 336.5 L603.1 343.3 L609.0 348.3 L614.9 347.3 L624.7 336.5 L626.7 333.5 L640.0 316.7 M626.7 333.5 L621.8 325.6 L623.7 320.7 M626.7 333.5 L630.6 336.5 L640.0 334.0 M609.0 348.3 L607.0 352.2 L608.0 355.2 L603.1 361.1 L599.1 359.1 L593.2 359.1 L586.3 358.1 M614.9 347.3 L618.8 351.2 L634.6 361.1 L640.0 357.1 M618.8 351.2 L616.8 361.1 L609.0 368.0 L610.9 372.9 L618.8 377.8 M634.6 361.1 L635.6 370.9 L628.7 377.8 M592.2 361.1 L593.2 364.0 L591.2 368.0 L591.2 380.0 M578.4 363.1 L578.4 369.0 L565.6 370.9 L566.6 380.0 M578.4 369.0 L583.3 373.9 L583.3 380.0 M599.1 361.1 L605.0 367.0 L609.0 368.0 M610.1 202.2 L626.5 198.7 L640.5 199.9 L642.9 205.7 L633.5 212.7 L621.8 215.1 L614.8 218.6 M642.9 205.7 L652.2 210.4 L659.2 209.2 L661.6 197.5 L670.9 191.7 L680.3 194.0 M659.2 209.2 L661.6 217.4 L670.9 226.8 L676.7 236.1 M633.5 212.7 L638.2 224.4 L645.2 233.8 L649.4 238.0 M670.9 191.7 L680.3 202.2 L689.6 212.7 L691.9 217.4 L684.9 226.8 L680.3 234.9 M691.9 217.4 L703.6 215.1 L713.0 203.4 L703.6 194.0 L699.0 184.7 L701.3 180.0 M713.0 203.4 L717.7 210.4 L717.7 222.1 M703.6 194.0 L717.7 189.4 L727.0 194.0 L734.0 203.4 L741.0 215.1 M734.0 203.4 L741.0 194.0 L745.7 184.7 L743.4 180.0 M741.0 194.0 L759.7 191.7 L783.1 187.0 L806.0 185.8 M783.1 187.0 L783.1 203.4 L780.8 222.1 M759.7 191.7 L762.1 205.7 L759.7 219.7 M563.4 180.0 L570.4 189.4 L579.7 201.0 L582.1 208.1 L570.4 215.1 L558.7 216.2 L556.4 238.0 M582.1 208.1 L590.3 215.1 M548.0 208.4 L549.4 208.1 L558.7 216.2 M579.7 180.0 L593.8 187.0 L610.1 189.4 L619.5 190.5 M598.4 180.0 L610.1 189.4 M670.9 180.0 L675.6 187.0 L670.9 191.7 M806.0 222.1 L797.1 231.4 L787.3 238.0 M743.4 222.1 L744.4 238.0" fill="none" stroke="#626464" stroke-width="1" stroke-linejoin="round"/>
<path d="M300.0 58.5 L305.0 55.5 L310.5 56.0 L315.0 59.8 L316.2 66.0 L320.0 71.0 L323.8 72.2 L321.2 76.0 L322.0 81.0 L324.2 88.5 L323.2 96.5 L321.0 92.2 L318.8 86.0 L315.0 79.8 L313.8 73.5 L311.2 67.2 L308.8 62.2 L305.0 62.2 L301.2 63.0 L299.5 60.5Z M367.5 261.0 L371.2 258.5 L376.2 259.0 L380.0 262.0 L385.0 264.5 L390.0 267.2 L393.0 271.5 L396.8 276.5 L391.2 273.5 L386.2 270.8 L381.2 269.0 L376.2 266.5 L371.2 263.2 L368.8 263.0Z M438.8 377.5 L440.0 371.5 L442.5 369.0 L446.2 365.2 L449.2 362.2 L451.8 366.0 L448.8 369.0 L445.5 372.8 L444.5 377.0 L441.2 376.0Z M613.2 286.5 L615.0 285.2 L616.5 289.0 L618.2 292.8 L620.0 289.5 L621.5 286.5 L623.2 290.2 L624.0 293.5 L627.0 294.0 L624.5 297.8 L620.8 300.2 L618.2 304.0 L615.8 307.8 L612.0 309.0 L609.5 312.0 L607.0 313.2 L604.5 309.0 L607.0 306.5 L610.8 305.2 L613.2 301.5 L612.0 296.5 L612.5 291.5Z M527.5 503.2 L530.0 502.0 L531.2 507.0 L533.8 512.0 L532.5 517.0 L535.0 522.0 L536.8 525.8 L533.8 529.5 L534.5 534.5 L532.5 538.8 L528.8 534.5 L527.5 528.2 L526.2 522.0 L527.5 517.0 L526.2 510.8Z M424.5 413.2 L427.0 415.8 L428.0 422.0 L430.0 427.0 L432.5 429.5 L430.5 435.0 L428.8 430.8 L427.0 427.0 L425.0 420.8Z M123.5 655.2 L128.5 652.8 L133.5 654.0 L136.0 659.0 L134.8 665.2 L129.8 668.5 L124.8 667.0 L122.2 661.5Z M42.2 681.5 L46.0 680.2 L49.8 684.0 L51.5 689.0 L48.0 689.5 L44.0 686.0Z M57.2 685.2 L59.8 687.8 L62.2 692.8 L64.8 697.8 L68.5 702.8 L74.8 704.0 L81.0 705.2 L84.8 709.0 L81.0 711.0 L76.0 707.8 L69.8 707.0 L64.8 705.2 L61.0 700.2 L58.5 694.0 L57.2 689.0Z M141.0 709.0 L144.8 704.0 L147.2 696.5 L151.0 695.2 L154.8 699.0 L155.5 705.2 L151.0 709.0 L147.2 712.8 L143.5 714.0Z M784.0 729.0 L787.0 734.0 L790.8 739.0 L795.8 744.0 L796.5 750.2 L793.2 755.2 L789.5 754.0 L787.0 747.8 L785.0 740.2 L783.5 734.0Z M769.5 792.8 L773.2 789.5 L778.2 789.0 L779.5 794.0Z M540.0 600.8 L543.5 604.7 L543.9 612.2 L545.7 613.9 L547.9 613.1 L551.0 613.5 L553.6 610.4 L555.8 603.4 L557.6 603.4 L557.1 606.9 L556.2 611.3 L558.0 613.1 L562.0 612.2 L562.4 610.0 L563.7 610.4 L563.4 613.9 L559.8 614.4 L557.1 615.7 L552.7 616.6 L549.2 617.9 L547.5 621.0 L545.7 620.1 L541.3 617.5 L541.3 612.2 L542.2 606.9 L540.9 603.4Z" fill="#2a4360" stroke="#1f3652" stroke-width="1"/>
<path d="M783.2 651.5 L785.8 659.0 L784.5 666.5 L792.0 689.0 L794.5 704.0 L792.0 709.0 L788.2 711.5 L787.0 719.0 L787.5 724.0 L784.5 729.0" fill="none" stroke="#000" stroke-width="3.6" stroke-linejoin="round"/><path d="M783.2 651.5 L785.8 659.0 L784.5 666.5 L792.0 689.0 L794.5 704.0 L792.0 709.0 L788.2 711.5 L787.0 719.0 L787.5 724.0 L784.5 729.0" fill="none" stroke="#014363" stroke-width="2" stroke-linejoin="round"/>
<path d="M181.0 6.0 L189.8 13.5 L194.8 23.5 L198.5 33.5 L200.5 43.5 L200.5 71.0 L199.8 88.5 L196.0 98.5 L191.0 107.2 L188.5 113.5 L187.2 123.5 L184.8 132.2 L181.0 141.0 L176.0 148.5 L175.5 156.0 L171.0 162.2 L166.0 169.8 L161.0 178.5 L156.0 188.5 L149.8 199.8 L146.0 203.5 L144.8 209.0 M241.0 6.0 L234.8 12.2 L229.8 18.5 L228.5 28.5 L228.0 41.0 L226.0 53.5 L223.5 61.0 L218.5 64.8 L211.0 67.2 L204.8 69.8 L201.0 71.5 M241.0 6.0 L246.0 12.2 L249.8 21.0 L256.0 28.5 L261.0 36.0 L263.5 43.5 L263.5 49.8 L266.0 54.8 L271.0 58.5 L278.5 60.2 L290.0 60.5 M198.5 209.0 L206.0 204.8 L216.0 199.8 L226.0 192.2 L231.0 187.2 L241.0 182.2 L251.0 178.5 L261.0 174.0 L271.0 171.0 L281.0 168.5 L290.0 166.0 M290.0 60.5 L297.5 54.8 L305.0 53.0 L312.5 56.0 L332.5 68.5 L342.5 77.2 L352.5 84.8 L362.5 91.0 L370.0 97.2 L377.5 104.8 L387.5 112.2 L395.0 117.2 L402.5 123.5 L406.2 131.0 L410.0 136.0 L420.0 146.0 L427.5 157.2 L435.0 166.0 L445.0 186.0 L460.0 196.0 L468.8 209.0 M473.8 6.0 L472.5 16.0 L471.2 28.5 L468.8 38.5 L465.0 46.0 L457.5 52.2 L450.0 56.0 L440.0 58.5 L433.8 61.0 L430.0 68.5 L427.5 78.5 L423.8 86.0 L420.0 92.2 L416.2 101.0 L412.5 108.5 L410.0 116.0 L409.5 123.5 L406.2 131.0 L405.0 138.5 L402.5 148.5 L400.0 161.0 L397.5 181.0 L397.0 196.0 L397.5 209.0 M290.0 166.0 L300.0 163.5 L315.0 161.0 L327.5 159.8 L340.0 156.0 L352.5 151.0 L365.0 147.2 L375.0 143.5 L385.0 142.2 L405.0 134.8 L415.0 133.5 L440.0 131.0 L450.0 131.0 L470.0 136.0 L485.0 137.2 L500.0 136.5 L515.0 136.0 L545.0 156.0 L548.0 157.0 M365.0 133.5 L367.5 123.5 L372.5 113.5 L382.5 104.8 L395.0 99.8 L407.5 100.5 L420.0 103.5 L430.0 108.5 L435.0 116.0 L437.0 126.0 L435.0 136.0 L432.5 146.0 L428.8 156.0 L420.0 162.2 L407.5 166.0 L395.0 166.0 L382.5 162.2 L372.5 153.5 L367.0 143.5 L365.0 133.5  M588.2 6.0 L587.0 16.0 L589.5 26.0 L593.2 33.5 L597.0 38.5 L602.0 43.5 L604.5 49.8 L604.0 58.5 L602.0 68.5 L600.8 78.5 L602.5 88.5 L604.5 96.0 L599.5 102.2 L593.2 107.2 L590.8 112.2 L593.2 117.2 L595.8 123.5 L599.5 129.8 L604.5 134.8 L608.2 139.8 L610.8 146.0 L614.5 149.8 M548.0 157.2 L552.0 158.5 L562.0 158.0 L572.0 157.2 L582.0 160.5 L592.0 159.0 L602.0 156.0 L609.5 153.5 L614.5 150.5 L618.2 148.0 L622.0 147.2 L629.5 149.0 L639.5 149.8 L649.5 148.0 L659.5 143.5 L667.0 137.2 L674.5 132.2 L684.5 128.5 L694.5 123.5 L702.0 118.5 L712.0 113.5 L732.0 101.0 L742.0 95.5 L752.0 91.0 L772.0 81.0 L792.0 76.0 L799.5 73.5 L806.0 71.5 M659.5 143.5 L663.2 147.2 L668.2 151.0 L672.0 156.0 L673.2 162.2 L682.0 171.0 L684.5 176.0 L685.2 179.6 M756.5 179.9 L772.0 176.0 L784.5 174.0 L797.0 172.2 L806.0 174.0  M614.5 150.5 L607.0 154.8 L599.5 158.5 L593.2 161.0 L583.2 171.0 L576.1 180.0 M6.0 256.5 L21.0 255.2 L36.0 256.0 L51.0 254.0 L66.0 250.2 L81.0 246.0 L96.0 241.0 L111.0 234.0 L123.5 229.0 L136.0 226.0 L148.5 224.5 L156.0 225.2 L161.0 226.0 M161.0 226.0 L162.2 230.2 L167.2 232.0 L173.5 231.0 L176.0 226.5 L173.5 221.5 L168.5 220.2 L163.5 221.5 L161.0 226.0 M147.2 209.0 L152.2 221.5 L156.0 225.2 M176.0 224.0 L198.5 209.0 M164.8 232.0 L166.0 241.5 L168.5 254.0 L169.8 266.5 L172.2 279.0 L173.0 291.5 L172.2 304.0 L173.0 316.5 L176.0 329.0 L181.0 354.0 L183.0 366.5 L183.5 381.5 L182.2 391.5 L178.5 401.5 L172.2 412.0 M397.5 209.0 L398.8 224.0 L397.0 236.5 L395.0 249.0 L397.5 279.0 L397.0 294.0 L398.8 309.0 L401.2 339.0 L402.3 349.5 M427.9 349.9 L430.0 347.8 L440.0 339.0 L450.0 331.5 L457.5 324.0 L480.0 294.0 L487.5 281.5 L495.0 266.5 L503.8 240.2 L510.0 235.2 L520.0 229.0 L530.0 224.0 L540.0 220.2 L547.6 215.5 M468.8 209.0 L475.0 216.5 L480.0 224.0 L483.8 231.5 L490.0 235.2 L497.5 236.5 L503.8 239.5 L510.0 236.5 L515.0 235.2 L522.5 238.5 L527.5 244.0 L533.8 250.2 L536.2 259.0 L537.5 269.0 L542.5 289.0 L548.0 297.2 M470.5 363.9 L475.0 363.5 L485.0 361.5 L505.0 359.0 L525.0 354.0 L535.0 353.5 L539.5 353.2 M349.5 401.6 L345.0 402.8 L337.5 406.5 L332.5 412.0 M640.4 309.8 L644.5 307.8 L674.5 289.0 L684.5 284.0 L694.5 281.5 L704.5 277.8 L714.5 272.8 L722.0 266.5 L727.0 257.8 L762.0 240.2 L767.7 238.1 M548.0 297.6 L549.2 299.8 M584.5 294.0 L580.8 299.0 L580.2 299.9 M640.5 364.8 L644.5 365.2 L654.5 367.0 L667.0 368.5 L677.0 369.0 L697.0 371.5 L707.0 372.0 L717.0 371.5 L727.0 372.8 L737.0 373.5 L747.0 373.5 L754.5 372.8 L792.0 354.0 L799.5 351.5 L806.0 350.2  M599.9 380.2 L600.8 381.5 L603.2 389.0 L610.8 404.0 L614.5 412.0 M557.8 380.2 L557.0 381.5 L548.0 399.5 M757.2 238.5 L760.8 249.0 L762.0 256.5 L767.0 271.5 L769.5 280.2 M739.5 254.0 L739.5 261.5 L747.0 266.5 L757.0 272.8 L769.5 280.2 L779.5 286.5 L806.0 307.8 M6.0 460.8 L21.0 462.0 L36.0 464.5 L51.0 465.8 L66.0 468.2 L78.5 473.2 L88.5 476.5 L98.5 475.0 L111.0 474.0 L123.5 473.2 L133.5 473.2 L141.0 475.8 L147.2 479.5 L153.5 480.8 L166.0 479.5 L181.0 478.2 L196.0 476.5 L211.0 476.5 L241.0 475.0 L256.0 474.5 L268.5 472.0 L281.0 468.2 L290.0 464.5 M171.0 412.0 L168.5 419.5 L164.8 427.0 L162.2 437.0 L161.0 447.0 L158.5 457.0 L153.5 472.0 L152.2 479.5 L148.5 487.0 L142.2 497.0 L137.2 507.0 L134.8 517.0 L132.2 529.5 L131.0 542.0 L130.5 557.0 L130.5 572.0 L129.8 587.0 L128.5 594.5 L126.5 604.5 L126.1 613.0 M147.2 472.0 L151.0 469.5 L154.8 470.8 L155.5 475.8 L153.5 480.8 L149.8 481.5 L147.2 478.2 L147.2 472.0 M256.0 474.5 L248.5 494.5 L243.5 504.5 L238.5 512.0 L236.0 522.0 L232.2 529.5 L228.5 534.5 L223.5 542.0 L218.5 548.2 L216.0 557.0 L214.8 567.0 L215.5 574.5 L213.5 584.5 L211.0 594.5 L203.5 609.5 L201.9 613.0 M427.5 446.2 L432.5 459.5 L437.5 468.2 L440.0 472.0 L437.5 478.2 L433.8 485.8 L430.0 494.5 L425.0 504.5 L412.5 524.5 L390.0 554.5 L382.5 562.0 L367.5 574.5 L347.5 589.5 L337.5 595.8 L317.5 600.8 L311.2 605.8 L308.3 613.0 M440.0 472.0 L450.0 473.2 L460.0 472.0 L467.5 468.2 L477.5 465.0 L487.5 462.0 L497.5 457.0 L507.5 450.8 L512.5 447.0 L516.2 440.8 L521.2 432.0 L526.2 424.5 L532.5 418.2 L538.8 414.5 L540.0 412.0 M335.0 412.0 L327.5 419.5 L317.5 430.8 L307.5 439.5 L300.0 449.5 L290.0 459.5 M615.8 412.0 L622.0 417.0 L627.0 422.0 L630.8 427.0 L632.0 433.2 L632.0 439.5 L631.5 449.5 L630.0 462.0 L629.5 474.5 L630.0 487.0 L629.5 497.0 L630.8 507.0 L633.2 517.0 L637.0 527.0 L642.0 535.8 L645.8 543.2 L647.0 552.0 L648.2 559.5 L650.8 567.0 L660.8 607.0 L662.6 613.0 M627.0 422.0 L632.0 425.0 L635.8 429.0 L637.5 433.2 L634.5 436.2 L632.0 439.5 M637.0 429.5 L642.0 437.0 L647.0 443.2 L664.5 452.0 L674.5 456.5 L684.5 459.5 L697.0 462.0 L709.5 465.8 L722.0 467.5 L747.0 471.5 L759.5 473.2 L772.0 477.0 L784.5 482.0 L794.5 484.5 L799.5 487.0 L806.0 493.2 M806.0 558.2 L802.0 562.0 L799.5 567.0 L794.5 582.0 L787.0 597.0 L784.5 607.0 L783.6 613.0  M6.0 660.2 L16.0 657.8 L36.0 650.2 L56.0 645.2 L66.0 644.0 L76.0 644.0 L86.0 646.0 L93.5 642.8 L101.0 641.5 L112.0 640.9 L123.5 640.2 L136.0 640.2 L146.0 641.5 L176.0 652.8 L186.0 655.2 L193.5 656.5 L203.5 654.0 L213.5 650.2 L233.5 645.2 L243.5 644.0 L253.5 643.5 L263.5 644.0 L273.5 642.8 L283.5 640.2 L290.0 637.8 M86.0 646.0 L91.0 654.0 L96.0 661.5 L103.5 666.5 L111.0 670.2 L121.0 671.5 L131.0 673.5 L141.0 677.8 L148.5 681.5 L156.0 684.0 L159.8 686.5 L166.0 682.8 L173.5 677.8 L181.0 669.0 L184.8 661.5 L186.0 655.2 M126.0 613.0 L126.0 619.0 L127.2 629.0 L128.5 640.2 L131.0 646.5 L134.8 654.0 L135.5 661.5 L132.2 673.5 M201.5 613.0 L198.5 619.0 L194.8 629.0 L192.2 639.0 L191.0 649.0 L192.2 656.5 M6.0 616.5 L11.0 621.5 L13.5 629.0 L13.5 639.0 L12.2 649.0 L13.5 656.5 L14.8 660.2 M290.0 640.2 L297.5 636.5 L305.0 631.5 L312.5 621.5 L320.0 623.5 L330.0 625.2 L340.0 627.8 L365.0 636.0 L372.5 637.8 L380.0 637.0 L386.2 634.0 L390.0 630.2 L395.0 626.5 L402.5 622.8 L410.0 620.2 L440.0 616.5 L450.0 617.0 L460.0 620.2 L480.0 615.2 L490.0 616.5 L502.5 616.5 L515.0 616.0 L525.0 619.0 L548.0 627.6 M307.1 613.0 L306.2 615.2 L305.5 621.5 L307.5 626.5 M548.0 629.4 L559.5 634.0 L572.0 637.8 L584.5 639.5 L597.0 639.0 L622.0 641.5 L659.5 649.0 L672.0 652.0 L682.0 652.8 L692.0 656.5 L712.0 661.5 L722.0 661.0 L732.0 660.2 L742.0 662.0 L762.0 658.5 L772.0 657.0 L779.5 655.2 L784.5 654.0 M664.7 613.0 L667.0 616.5 L674.5 626.5 L682.0 635.2 L697.0 650.2 L704.5 660.2 L710.8 670.2 L715.8 681.5 L719.5 691.5 L722.0 701.5 L727.0 711.5 L739.5 731.5 L744.5 741.5 L747.0 751.5 L754.5 789.0 L755.8 794.0 M785.0 613.0 L785.8 619.0 L786.5 629.0 L784.5 636.5 L779.5 651.5 L780.8 659.0 L784.5 666.5 L792.0 667.8 L794.5 661.5 L793.2 654.0 L789.5 646.5 L786.5 639.0 M792.0 667.8 L795.8 676.5 L803.2 691.5 L806.0 696.5 M540.0 412.0 L548.0 403.5 M402.0 350.0 L400.8 357.1 L402.6 363.0 L401.4 368.9 L402.0 373.6 L405.0 381.3 L403.2 390.2 L404.4 397.3 L407.9 403.2 L409.1 411.5 L413.8 420.9 L418.6 428.0 L422.1 437.5 L424.5 446.0 M350.0 401.4 L357.1 400.8 L366.6 399.1 L373.6 397.3 L383.1 390.2 L387.8 385.5 L392.6 376.0 L396.1 371.3 L400.8 368.3 M387.8 386.1 L394.9 385.5 L402.0 382.5 L405.6 380.7 M405.0 381.3 L409.1 374.8 L411.5 368.9 L412.7 367.7 L420.9 366.6 L432.8 363.0 L442.2 362.4 L450.5 363.0 L462.3 364.8 L470.0 364.2 M412.7 368.3 L416.2 360.6 L422.1 357.1 L426.9 350.0 M549.9 300.0 L552.8 303.9 L555.8 306.9 L556.3 311.8 L557.7 316.7 L559.7 319.2 L565.6 320.2 L568.6 322.2 L570.0 325.6 L572.5 330.5 L575.5 334.5 L578.4 337.4 L579.9 341.4 L582.4 345.3 L583.3 351.2 L582.4 356.2 L582.9 360.1 M581.4 300.0 L577.9 303.9 L576.0 308.9 L573.5 313.8 L572.0 318.7 L571.0 322.7 L569.6 325.6 M640.0 311.8 L633.6 316.3 L626.7 318.2 L618.8 320.7 L610.9 322.7 L607.0 326.6 L603.1 330.5 L598.1 334.0 L593.7 336.0 L589.3 340.4 L583.3 344.8 M540.0 352.2 L547.9 351.2 L555.8 351.2 L559.7 349.3 L564.6 347.8 L570.5 347.3 L575.5 348.3 L582.4 350.2 L587.3 350.7 L593.2 353.7 L599.1 353.2 L606.0 353.7 L609.0 356.2 L614.9 359.1 L620.8 361.6 L628.7 361.6 L634.6 361.6 L640.0 363.1 M582.9 360.1 L579.4 361.1 L576.5 363.1 L572.5 367.0 L567.6 369.0 L563.6 372.9 L560.7 376.8 L557.7 380.0 M582.9 360.1 L585.3 364.0 L589.3 366.0 L593.2 368.0 L595.2 372.9 L598.1 377.8 L600.1 380.0 M587.3 356.7 L590.2 361.1 L592.2 367.0 M575.0 349.3 L576.0 341.4 L579.4 335.5 L583.3 334.7 L591.2 335.0 L593.7 336.0 L594.0 344.3 L595.2 351.2 L593.2 354.2 L587.3 356.7 L581.4 358.6 L577.4 361.1 L575.5 357.1 L575.0 349.3 M684.9 180.0 L689.6 187.0 L703.6 190.5 L717.7 189.4 L727.0 201.0 L734.0 212.7 L741.0 216.2 L745.7 215.1 L750.4 222.1 L757.4 233.8 L759.0 238.0 M762.1 180.0 L750.4 184.7 L727.0 188.2 L717.7 189.4 M572.7 180.0 L565.7 191.7 L556.4 205.7 L548.0 216.2 M806.0 222.1 L792.5 229.1 L774.6 238.0" fill="none" stroke="#86700f" stroke-width="1" stroke-linejoin="round"/>
<path d="M6.0 105.2 L155.2 105.2 L156.0 108.5 L159.0 112.2 L161.0 115.2 L160.5 119.0 L158.5 122.5 L156.0 126.0 L152.2 129.8 L148.5 133.5 L144.8 138.5 L141.0 143.5 L137.8 149.0 L187.2 149.0 M202.2 6.0 L203.5 9.8 L206.0 16.0 L207.5 23.5 L206.0 28.5 L202.2 31.0 L203.5 36.0 L207.2 41.0 L209.8 47.2 L212.2 53.5 L216.0 57.2 L219.8 59.8 M219.8 59.8 L222.5 57.2 L225.0 53.5 L228.5 48.0 L233.5 43.5 L239.8 40.2 L246.0 39.0 L252.2 41.5 L257.2 45.2 L262.2 47.2 L263.5 43.5 L263.8 49.8 L267.2 52.2 L272.2 54.0 L277.2 54.2 L281.5 51.8 L283.5 47.2 L282.2 41.0 L278.5 37.2 L277.0 32.2 L278.5 27.2 L282.2 23.5 L290.0 22.2 M219.8 59.8 L226.0 60.0 L228.5 58.5 L231.0 62.2 L232.2 67.2 L229.8 72.2 L227.2 76.0 L228.5 79.8 L231.0 81.0 L229.8 84.8 L226.0 87.2 L227.2 92.2 L226.0 97.2 L222.2 99.0 L218.5 97.2 L214.8 93.5 L212.2 94.8 L209.8 99.8 L208.0 104.8 L206.0 107.2 L204.8 104.8 L205.5 101.0 L203.5 98.0 L199.8 98.0 L198.0 101.0 L199.8 104.0 L203.5 105.2 L202.2 111.0 L198.5 113.5 L194.8 116.0 L193.5 119.8 L197.2 122.2 L199.8 124.8 L197.2 127.2 L192.2 126.0 L189.8 128.5 L192.2 132.2 L196.0 134.8 L194.8 138.5 L191.0 141.0 L189.8 144.8 L187.2 149.0 L187.2 152.2 L191.0 154.8 L192.2 158.5 L189.8 159.8 L186.0 157.2 L183.5 158.5 L184.8 162.2 L188.5 164.8 L187.2 168.5 L183.5 169.8 L178.5 168.5 L176.0 169.8 L172.2 172.2 L169.8 174.8 L171.0 178.5 L174.8 179.8 L176.0 182.2 L173.5 184.8 L169.8 186.0 L168.5 189.8 L171.0 192.2 L168.5 193.5 L166.0 190.5 L163.5 193.5 L162.2 197.2 L159.8 199.8 L156.0 198.5 L154.8 201.0 L157.2 203.5 L161.0 204.8 L162.2 209.0 M207.2 105.2 L290.0 105.2 M290.0 105.2 L311.2 105.2 L312.5 99.8 L310.5 89.8 L323.8 91.5 L365.0 91.2 L402.5 90.5 L421.2 91.0 L445.0 92.5 L480.0 93.5 L540.0 94.2 L548.0 94.5 M290.0 22.2 L300.2 18.8 L308.2 17.8 L309.8 13.0 L306.5 8.2 L304.2 6.0 M548.0 94.7 L572.0 95.2 L604.5 96.0 L634.5 96.5 L652.0 95.0 L697.0 95.5 L739.5 95.5 L772.0 94.8 L787.0 94.2 L806.0 98.0 M635.8 96.0 L642.0 92.2 L649.5 89.8 L657.0 87.2 L667.0 84.8 L675.8 82.2 L678.2 78.5 L682.0 74.8 L689.5 72.2 L695.8 69.8 L697.0 64.8 L699.5 59.8 L707.0 56.0 L708.2 49.8 L714.5 46.0 L722.0 42.2 L732.0 37.2 L742.0 32.2 L752.0 23.5 L759.5 17.2 L763.2 14.8 L765.8 13.5 M748.2 6.0 L752.0 8.5 L757.0 11.0 L762.0 11.0 L765.8 13.5 L764.5 18.5 L765.8 23.5 L769.5 28.5 L774.5 32.2 L778.2 37.2 L783.2 41.0 L789.5 42.2 L797.0 41.0 L802.0 38.5 L806.0 32.2 M787.0 94.2 L784.5 98.5 L783.2 106.0 L780.8 113.5 L782.0 119.0 L777.0 117.2 L772.0 119.8 L767.0 123.5 L763.2 128.5 L760.8 133.5 L758.2 138.0 L753.2 139.0 L748.2 137.2 L743.2 135.5 L738.2 136.5 L733.2 138.5 L728.2 142.2 L724.5 146.0 L722.0 149.8 L718.2 152.2 L715.8 148.5 L714.5 144.8 L710.8 143.5 L707.0 146.0 L703.2 149.8 L699.5 153.5 L694.5 155.5 L693.2 159.8 L692.0 164.8 L688.2 168.5 L682.0 169.8 L677.0 171.0 L672.0 173.5 L667.0 176.0 L662.0 178.5 L657.0 182.2 L652.0 186.0 L648.2 188.0 L642.0 186.5 L635.8 188.0 L629.5 189.8 L622.0 192.2 L615.8 194.8 L612.0 198.5 L610.0 203.5 L609.5 209.0 M156.0 209.0 L154.8 212.8 L158.5 215.2 L159.8 220.2 L157.2 224.0 L159.8 226.5 L156.0 227.8 L152.2 229.0 L151.0 232.8 L146.0 234.0 L143.0 237.0 L143.5 241.5 L147.2 244.0 L147.2 247.8 L142.2 250.2 L137.2 251.5 L134.8 254.0 L132.2 249.0 L129.8 250.2 L131.0 255.2 L127.2 256.5 L124.8 259.0 L126.0 262.8 L129.8 261.5 L131.0 266.5 L127.2 270.2 L123.5 267.8 L123.0 272.8 L124.8 277.8 L122.2 281.5 L123.5 286.5 L122.2 290.2 L117.2 292.8 L114.8 295.2 L116.0 299.0 L113.5 297.8 L111.0 295.2 L108.5 297.8 L109.8 301.5 L106.0 302.8 L102.2 305.2 L99.8 306.5 L102.2 309.0 L104.8 311.5 L102.2 314.0 L98.5 312.8 L95.5 315.2 L97.2 319.0 L101.0 320.2 L100.5 324.0 L96.0 325.2 L92.2 326.5 L93.5 330.2 L89.8 331.5 L86.0 329.0 L84.8 331.5 L88.5 334.0 L89.8 337.8 L87.2 340.2 L89.8 344.0 L92.2 346.5 L89.8 349.0 L84.8 346.5 L81.0 347.8 L82.2 351.5 L86.0 354.0 L88.5 356.5 L84.8 357.0 L81.0 355.2 L77.2 352.8 L74.8 355.2 L76.0 359.0 L79.8 361.5 L81.0 365.2 L77.2 366.5 L74.8 369.0 L76.0 372.8 L79.8 371.5 L81.0 375.2 L77.2 377.8 L74.8 375.2 L74.8 379.0 L78.5 381.5 L83.5 380.2 L86.5 376.5 L87.2 380.2 L84.8 384.0 L82.2 387.8 L83.5 391.5 L87.2 392.8 L88.0 395.2 L84.8 396.5 L85.5 401.5 L83.5 405.2 L79.8 404.0 L77.2 406.5 L81.0 410.2 L82.2 412.0 M143.0 238.5 L290.0 238.5 M290.0 238.5 L548.0 238.7 M299.2 238.0 L300.5 242.0 L304.0 245.5 L307.4 247.0 L305.6 265.0 L295.4 360.0 L290.1 412.0 L285.6 460.0 L279.7 503.0 L283.0 579.0 L285.6 648.0 M492.5 239.2 L497.5 264.0 L505.0 309.0 L512.5 349.0 L517.5 379.0 L521.2 412.0 M548.0 239.0 L588.2 239.0 L679.5 238.2 M609.5 209.0 L608.2 212.8 L602.0 215.2 L595.8 214.5 L590.8 217.8 L589.5 226.5 L588.2 239.0 M679.5 238.2 L687.0 235.2 L697.0 232.8 L704.5 231.5 L712.0 227.8 L719.5 225.2 L727.0 222.8 L732.0 220.2 L739.5 220.2 L747.0 220.2 L772.0 221.5 L797.0 222.8 L806.0 222.8 M679.5 238.2 L675.8 242.8 L670.8 246.5 L667.0 251.5 L663.2 256.5 L660.8 262.8 L663.2 267.8 L669.5 271.5 L674.5 275.2 L679.5 280.2 L684.5 283.5 L693.2 283.5 L695.8 287.8 L698.2 292.8 L702.0 299.0 L705.8 305.2 L707.0 311.5 L710.8 316.5 L714.5 322.8 L718.2 329.0 L724.5 334.0 L730.8 337.8 L735.8 341.5 L739.5 346.5 L743.2 352.8 L745.8 357.8 L750.8 361.5 L755.8 364.0 L759.5 369.0 L763.2 372.8 L765.8 376.5 L766.5 382.8 L768.2 386.5 L772.0 390.2 L774.5 395.2 L778.2 399.0 L779.5 404.0 L784.5 407.8 L790.8 410.2 L793.2 412.0 M6.0 415.5 L79.8 415.5 M81.0 412.0 L77.2 417.0 L76.0 422.0 L79.8 425.8 L84.8 423.2 L86.5 418.2 L83.5 415.8 L81.0 417.0 L81.0 427.0 L79.0 432.0 L79.8 438.2 L81.0 444.5 L83.5 449.5 L87.2 452.0 L91.0 450.8 L90.5 448.2 L87.2 449.5 L84.8 454.5 L83.5 459.5 L84.8 464.5 L88.5 465.8 L92.2 463.2 L91.0 459.5 L88.5 460.8 L92.2 465.8 L94.8 470.8 L99.8 472.0 L99.0 475.8 L96.0 477.5 L93.5 479.5 L92.2 483.2 L91.0 487.0 L87.2 485.8 L83.5 485.0 L79.8 487.0 L78.5 490.8 L81.0 494.0 L85.5 494.5 L89.8 493.2 L91.0 490.0 L87.2 489.5 L86.0 494.5 L87.2 499.5 L84.8 503.2 L86.0 507.0 L81.0 508.2 L77.2 509.5 L76.0 513.2 L73.5 517.0 L69.8 519.5 L66.0 520.0 L64.0 523.2 L66.0 527.0 L69.8 528.2 L72.2 525.8 L69.8 524.0 L67.2 528.2 L62.2 530.8 L61.0 535.8 L62.2 539.5 L58.5 540.8 L54.8 538.2 L52.2 539.5 L54.8 543.2 L59.8 544.5 L58.5 548.2 L54.8 552.0 L52.2 557.0 L48.5 557.0 L47.2 559.5 L49.8 562.0 L54.8 561.5 L56.0 559.5 L53.5 558.2 L52.2 564.5 L53.5 569.5 L43.5 570.0 L47.2 575.8 L49.8 582.0 L44.8 583.2 L47.2 587.0 L50.5 590.8 L44.8 594.0 L186.0 594.0 L184.8 598.2 L183.5 603.2 L182.2 607.0 L181.0 610.8 L179.7 613.0 M522.5 412.0 L523.8 419.5 L526.2 429.5 L530.0 439.5 L533.8 449.5 L537.5 458.2 L540.0 465.8 L538.8 474.5 L545.0 479.5 L543.8 484.5 L538.8 487.0 L535.0 492.0 L533.0 499.5 L533.8 512.0 L534.5 524.5 L533.8 537.0 L533.0 549.5 L531.2 562.0 L530.0 574.5 L533.8 584.5 L537.5 594.5 L540.0 602.0 L541.2 609.5 L542.0 613.0 M537.5 594.5 L344.5 594.5 L343.8 599.5 L341.2 605.8 L343.8 609.5 L346.1 613.0 M793.2 412.0 L797.0 415.8 L800.8 422.0 L802.0 428.2 L804.5 432.0 L806.0 437.0 M179.0 613.0 L178.5 614.0 L178.0 621.5 L179.8 627.8 L182.2 634.0 L186.0 639.0 L189.8 644.0 L190.5 650.2 L192.2 655.2 L193.5 661.5 L196.0 665.2 L199.8 668.5 L204.8 669.0 M547.5 620.2 L548.0 620.3 M346.5 613.0 L351.2 617.8 L355.5 621.5 L358.8 626.5 L358.0 632.8 L355.5 637.8 L357.5 642.8 L360.0 646.5 M558.9 621.0 L582.6 622.3 L600.0 622.7 L650.0 626.0 L700.0 629.5 L740.0 632.2 M740.0 632.2 L743.8 633.1 L744.3 638.3 L746.0 643.4 L747.8 648.6 L752.1 650.3 L757.2 650.3 L758.6 646.9 L759.3 641.7 L760.3 636.6 L759.8 631.4 L758.1 626.2 L757.2 621.0 L758.1 615.9 L760.7 612.4 L764.1 609.8 L767.6 609.5 L771.0 610.7 L773.6 612.4 L777.1 614.1 L781.4 615.9 L785.7 616.7 L791.7 617.9 M529.4 570.0 L529.9 577.0 L535.1 584.9 L537.3 593.7 L540.0 600.8 M547.5 620.8 L558.9 621.0" fill="none" stroke="#000" stroke-width="1" stroke-linejoin="round"/>
<circle cx="406.5" cy="406.5" r="159.3" fill="none" stroke="#e0e0e0" stroke-width="0.85" shape-rendering="geometricPrecision"/>
<circle cx="406.5" cy="406.5" r="279.2" fill="none" stroke="#e0e0e0" stroke-width="0.85" shape-rendering="geometricPrecision"/>
<circle cx="406.5" cy="406.5" r="399.0" fill="none" stroke="#e0e0e0" stroke-width="0.85" shape-rendering="geometricPrecision"/>
<circle cx="406.5" cy="406.5" r="518.8" fill="none" stroke="#e0e0e0" stroke-width="0.85" shape-rendering="geometricPrecision"/>
<text x="405.4" y="371.7" font-size="10" font-weight="bold" fill="#ffff90" stroke="#3a2f2a" stroke-width="1.2" paint-order="stroke" text-anchor="middle" textLength="13.5" lengthAdjust="spacing" style="font-family:'DejaVu Sans Mono','Liberation Mono',monospace">31</text>
<rect x="394.7" y="245.7" width="21.4" height="3" fill="#5d4f4b"/>
<text x="405.4" y="251.9" font-size="10" font-weight="bold" fill="#ffff90" stroke="#3a2f2a" stroke-width="1.2" paint-order="stroke" text-anchor="middle" textLength="20.2" lengthAdjust="spacing" style="font-family:'DejaVu Sans Mono','Liberation Mono',monospace">125</text>
<rect x="394.7" y="125.8" width="21.4" height="3" fill="#5d4f4b"/>
<text x="405.4" y="132.0" font-size="10" font-weight="bold" fill="#ffff90" stroke="#3a2f2a" stroke-width="1.2" paint-order="stroke" text-anchor="middle" textLength="20.2" lengthAdjust="spacing" style="font-family:'DejaVu Sans Mono','Liberation Mono',monospace">219</text>
<rect x="394.7" y="6.0" width="21.4" height="3" fill="#5d4f4b"/>
<text x="405.4" y="12.2" font-size="10" font-weight="bold" fill="#ffff90" stroke="#3a2f2a" stroke-width="1.2" paint-order="stroke" text-anchor="middle" textLength="20.2" lengthAdjust="spacing" style="font-family:'DejaVu Sans Mono','Liberation Mono',monospace">313</text>
<circle cx="406.5" cy="406.5" r="39.5" fill="none" stroke="#ff0000" stroke-width="1"/>
<g stroke="#f0c000" fill="none" stroke-width="1.2"><circle cx="376.5" cy="12.5" r="4.2"/><path d="M374.0 12.5H379.0"/></g>
<g stroke="#e88000" fill="none" stroke-width="1.2"><circle cx="770.5" cy="558.5" r="4.2"/><path d="M768.0 558.5H773.0"/></g>
<g stroke="#f0c000" fill="none" stroke-width="1.2"><circle cx="781.5" cy="587.5" r="4.2"/><path d="M779.0 587.5H784.0"/></g>
<g stroke="#f0f000" fill="none" stroke-width="1.2"><circle cx="774.5" cy="615.5" r="4.2"/><path d="M772.0 615.5H777.0"/></g>
<g stroke="#f0c800" fill="none" stroke-width="1.2"><circle cx="789.5" cy="635.5" r="4.2"/><path d="M787.0 635.5H792.0"/></g>
<path d="M527.5 82.5H534.5 M531 79V86" stroke="#e06000" stroke-width="1" fill="none"/>
</g>
<rect x="812.5" y="8.5" width="319" height="319" fill="none" stroke="#c0c0c0" stroke-width="1" rx="6"/>
<rect x="812.5" y="333.5" width="319" height="114" fill="none" stroke="#c0c0c0" stroke-width="1" rx="6"/>
<rect x="812.5" y="453.5" width="319" height="348.5" fill="none" stroke="#c0c0c0" stroke-width="1" rx="6"/>
<rect x="819.5" y="16.5" width="57" height="17" fill="#5c0000" stroke="#c0c0c0" stroke-width="1"/>
<text x="823.8" y="29.4" font-size="13" fill="#d0d0d0" font-weight="bold" textLength="48.8" lengthAdjust="spacingAndGlyphs" style="font-family:&quot;Liberation Serif&quot;,&quot;DejaVu Serif&quot;,serif">STRIKE</text>
<rect x="883.5" y="16.5" width="57" height="17" fill="#333" stroke="#c0c0c0" stroke-width="1"/>
<text x="890.3" y="29.4" font-size="13" fill="#c0c0c0" font-weight="bold" textLength="43.8" lengthAdjust="spacingAndGlyphs" style="font-family:&quot;Liberation Serif&quot;,&quot;DejaVu Serif&quot;,serif">NOISE</text>
<rect x="994.5" y="16.5" width="127" height="17" fill="#333" stroke="#c0c0c0" stroke-width="1"/>
<text x="998.2" y="29.8" font-size="12.5" fill="#fff" font-weight="bold" textLength="62.5" lengthAdjust="spacingAndGlyphs" style="font-family:&quot;DejaVu Sans Condensed&quot;,&quot;DejaVu Sans&quot;,&quot;Liberation Sans&quot;,sans-serif">Bng 119°</text>
<text x="1075.5" y="29.8" font-size="12.5" fill="#00e000" font-weight="bold" textLength="42.6" lengthAdjust="spacingAndGlyphs" style="font-family:&quot;DejaVu Sans Condensed&quot;,&quot;DejaVu Sans&quot;,&quot;Liberation Sans&quot;,sans-serif">331mi</text>
<rect x="821.5" y="64.5" width="81" height="15" fill="#555" stroke="#c0c0c0" stroke-width="1"/>
<text x="828.8" y="76.0" font-size="11" fill="#f0f0f0" textLength="66.5" lengthAdjust="spacingAndGlyphs" style="font-family:&quot;DejaVu Sans&quot;,&quot;Liberation Sans&quot;,sans-serif">Strikes/min</text>
<rect x="931.5" y="64.5" width="81" height="15" fill="#555" stroke="#c0c0c0" stroke-width="1"/>
<text x="943.0" y="76.0" font-size="11" fill="#f0f0f0" textLength="58.2" lengthAdjust="spacingAndGlyphs" style="font-family:&quot;DejaVu Sans&quot;,&quot;Liberation Sans&quot;,sans-serif">Close/min</text>
<rect x="1041.5" y="64.5" width="81" height="15" fill="#555" stroke="#c0c0c0" stroke-width="1"/>
<text x="1050.2" y="76.0" font-size="11" fill="#f0f0f0" textLength="62.8" lengthAdjust="spacingAndGlyphs" style="font-family:&quot;DejaVu Sans&quot;,&quot;Liberation Sans&quot;,sans-serif">Noises/min</text>
<text x="903.0" y="111.6" font-size="28" fill="#fff" font-weight="bold" text-anchor="end" style="font-family:&quot;DejaVu Sans&quot;,&quot;Liberation Sans&quot;,sans-serif">0</text>
<text x="1013.0" y="111.6" font-size="28" fill="#fff" font-weight="bold" text-anchor="end" style="font-family:&quot;DejaVu Sans&quot;,&quot;Liberation Sans&quot;,sans-serif">0</text>
<text x="1122.6" y="111.6" font-size="28" fill="#c0c0c0" font-weight="bold" text-anchor="end" style="font-family:&quot;DejaVu Sans&quot;,&quot;Liberation Sans&quot;,sans-serif">0</text>
<text x="826.5" y="142.7" font-size="12" fill="#fff" textLength="76.7" lengthAdjust="spacingAndGlyphs" style="font-family:&quot;DejaVu Sans&quot;,&quot;Liberation Sans&quot;,sans-serif">Total Strikes</text>
<text x="944.1" y="142.7" font-size="12" fill="#fff" textLength="68.6" lengthAdjust="spacingAndGlyphs" style="font-family:&quot;DejaVu Sans&quot;,&quot;Liberation Sans&quot;,sans-serif">Total Close</text>
<text x="1046.7" y="142.7" font-size="12" fill="#c0c0c0" textLength="76.2" lengthAdjust="spacingAndGlyphs" style="font-family:&quot;DejaVu Sans&quot;,&quot;Liberation Sans&quot;,sans-serif">Total Noises</text>
<text x="903.2" y="160.8" font-size="12" fill="#fff" text-anchor="end" style="font-family:&quot;DejaVu Sans&quot;,&quot;Liberation Sans&quot;,sans-serif">18</text>
<text x="1012.7" y="160.8" font-size="12" fill="#fff" text-anchor="end" style="font-family:&quot;DejaVu Sans&quot;,&quot;Liberation Sans&quot;,sans-serif">0</text>
<text x="1122.9" y="160.8" font-size="12" fill="#fff" text-anchor="end" style="font-family:&quot;DejaVu Sans&quot;,&quot;Liberation Sans&quot;,sans-serif">12</text>
<text x="821.0" y="214.3" font-size="12" fill="#c0c0c0" textLength="164.9" lengthAdjust="spacingAndGlyphs" style="font-family:&quot;DejaVu Sans&quot;,&quot;Liberation Sans&quot;,sans-serif">Lightning type distribution</text>
<line x1="821" y1="217.5" x2="1124" y2="217.5" stroke="#a0a0a0" stroke-width="1"/>
<text x="821.0" y="236.7" font-size="12" fill="#fff" font-weight="bold" textLength="84.7" lengthAdjust="spacingAndGlyphs" style="font-family:&quot;DejaVu Sans Condensed&quot;,&quot;DejaVu Sans&quot;,&quot;Liberation Sans&quot;,sans-serif">Cloud-ground</text>
<text x="912.9" y="236.7" font-size="12" fill="#e0e0e0" textLength="8.5" lengthAdjust="spacingAndGlyphs" style="font-family:&quot;DejaVu Sans&quot;,&quot;Liberation Sans&quot;,sans-serif">+</text>
<rect x="925.5" y="227.5" width="50" height="10" fill="#000" stroke="#909090" stroke-width="1" rx="2"/>
<rect x="926" y="228" width="14" height="9" fill="#ff0000"/>
<text x="979.3" y="236.7" font-size="12" fill="#fff" font-weight="bold" textLength="29.7" lengthAdjust="spacingAndGlyphs" style="font-family:&quot;DejaVu Sans Condensed&quot;,&quot;DejaVu Sans&quot;,&quot;Liberation Sans&quot;,sans-serif">28%</text>
<rect x="1016" y="231" width="7" height="2" fill="#e0e0e0"/>
<rect x="1028.5" y="227.5" width="50" height="10" fill="#000" stroke="#909090" stroke-width="1" rx="2"/>
<rect x="1029" y="228" width="30" height="9" fill="#90d0ff"/>
<text x="1081.9" y="236.7" font-size="12" fill="#fff" font-weight="bold" textLength="30.2" lengthAdjust="spacingAndGlyphs" style="font-family:&quot;DejaVu Sans Condensed&quot;,&quot;DejaVu Sans&quot;,&quot;Liberation Sans&quot;,sans-serif">61%</text>
<text x="821.0" y="260.6" font-size="12" fill="#c0c0c0" font-weight="bold" textLength="38.4" lengthAdjust="spacingAndGlyphs" style="font-family:&quot;DejaVu Sans Condensed&quot;,&quot;DejaVu Sans&quot;,&quot;Liberation Sans&quot;,sans-serif">Count</text>
<text x="925.2" y="260.6" font-size="12" fill="#fff" font-weight="bold" style="font-family:&quot;DejaVu Sans Condensed&quot;,&quot;DejaVu Sans&quot;,&quot;Liberation Sans&quot;,sans-serif">5</text>
<text x="1028.6" y="260.6" font-size="12" fill="#fff" font-weight="bold" style="font-family:&quot;DejaVu Sans Condensed&quot;,&quot;DejaVu Sans&quot;,&quot;Liberation Sans&quot;,sans-serif">11</text>
<text x="821.0" y="290.4" font-size="12" fill="#fff" font-weight="bold" textLength="63.8" lengthAdjust="spacingAndGlyphs" style="font-family:&quot;DejaVu Sans Condensed&quot;,&quot;DejaVu Sans&quot;,&quot;Liberation Sans&quot;,sans-serif">Intracloud</text>
<text x="912.9" y="290.4" font-size="12" fill="#e0e0e0" textLength="8.5" lengthAdjust="spacingAndGlyphs" style="font-family:&quot;DejaVu Sans&quot;,&quot;Liberation Sans&quot;,sans-serif">+</text>
<rect x="925.5" y="281.5" width="50" height="10" fill="#000" stroke="#909090" stroke-width="1" rx="2"/>
<rect x="926" y="282" width="3" height="9" fill="#ff69b4"/>
<text x="979.3" y="290.4" font-size="12" fill="#fff" font-weight="bold" textLength="21.7" lengthAdjust="spacingAndGlyphs" style="font-family:&quot;DejaVu Sans Condensed&quot;,&quot;DejaVu Sans&quot;,&quot;Liberation Sans&quot;,sans-serif">6%</text>
<rect x="1016" y="285" width="7" height="2" fill="#e0e0e0"/>
<rect x="1028.5" y="281.5" width="50" height="10" fill="#000" stroke="#909090" stroke-width="1" rx="2"/>
<rect x="1029" y="282" width="3" height="9" fill="#00e000"/>
<text x="1081.9" y="290.4" font-size="12" fill="#fff" font-weight="bold" textLength="22.1" lengthAdjust="spacingAndGlyphs" style="font-family:&quot;DejaVu Sans Condensed&quot;,&quot;DejaVu Sans&quot;,&quot;Liberation Sans&quot;,sans-serif">6%</text>
<text x="821.0" y="314.6" font-size="12" fill="#c0c0c0" font-weight="bold" textLength="38.4" lengthAdjust="spacingAndGlyphs" style="font-family:&quot;DejaVu Sans Condensed&quot;,&quot;DejaVu Sans&quot;,&quot;Liberation Sans&quot;,sans-serif">Count</text>
<text x="925.2" y="314.6" font-size="12" fill="#fff" font-weight="bold" style="font-family:&quot;DejaVu Sans Condensed&quot;,&quot;DejaVu Sans&quot;,&quot;Liberation Sans&quot;,sans-serif">1</text>
<text x="1028.6" y="314.6" font-size="12" fill="#fff" font-weight="bold" style="font-family:&quot;DejaVu Sans Condensed&quot;,&quot;DejaVu Sans&quot;,&quot;Liberation Sans&quot;,sans-serif">1</text>
<text x="821.3" y="352.6" font-size="16.5" fill="#00e000" font-weight="bold" textLength="202.4" lengthAdjust="spacingAndGlyphs" style="font-family:&quot;DejaVu Sans Condensed&quot;,&quot;DejaVu Sans&quot;,&quot;Liberation Sans&quot;,sans-serif">3/20/2026 2:30:18 AM</text>
<line x1="821" y1="358.5" x2="1123" y2="358.5" stroke="#a0a0a0" stroke-width="1"/>
<text x="821.0" y="387.7" font-size="12" fill="#fff" textLength="49.4" lengthAdjust="spacingAndGlyphs" style="font-family:&quot;DejaVu Sans&quot;,&quot;Liberation Sans&quot;,sans-serif">Squelch</text>
<text x="909.1" y="387.7" font-size="12" fill="#fff" textLength="7.8" lengthAdjust="spacingAndGlyphs" style="font-family:&quot;DejaVu Sans&quot;,&quot;Liberation Sans&quot;,sans-serif">0</text>
<text x="980.8" y="387.7" font-size="12" fill="#fff" textLength="44.4" lengthAdjust="spacingAndGlyphs" style="font-family:&quot;DejaVu Sans&quot;,&quot;Liberation Sans&quot;,sans-serif">Upload</text>
<text x="1060.4" y="387.7" font-size="12" fill="#c0c0c0" textLength="54.8" lengthAdjust="spacingAndGlyphs" style="font-family:&quot;DejaVu Sans&quot;,&quot;Liberation Sans&quot;,sans-serif">Disabled</text>
<text x="821.0" y="407.6" font-size="12" fill="#fff" textLength="73.2" lengthAdjust="spacingAndGlyphs" style="font-family:&quot;DejaVu Sans&quot;,&quot;Liberation Sans&quot;,sans-serif">Persistence</text>
<text x="909.1" y="407.6" font-size="12" fill="#fff" textLength="41.9" lengthAdjust="spacingAndGlyphs" style="font-family:&quot;DejaVu Sans&quot;,&quot;Liberation Sans&quot;,sans-serif">90 min</text>
<text x="980.8" y="407.6" font-size="12" fill="#fff" textLength="51.3" lengthAdjust="spacingAndGlyphs" style="font-family:&quot;DejaVu Sans&quot;,&quot;Liberation Sans&quot;,sans-serif">Capture</text>
<text x="1060.4" y="407.6" font-size="12" fill="#00e000" textLength="37.6" lengthAdjust="spacingAndGlyphs" style="font-family:&quot;DejaVu Sans&quot;,&quot;Liberation Sans&quot;,sans-serif">Active</text>
<text x="821.0" y="427.6" font-size="12" fill="#fff" textLength="40.4" lengthAdjust="spacingAndGlyphs" style="font-family:&quot;DejaVu Sans&quot;,&quot;Liberation Sans&quot;,sans-serif">Range</text>
<text x="909.1" y="427.6" font-size="12" fill="#fff" textLength="41.9" lengthAdjust="spacingAndGlyphs" style="font-family:&quot;DejaVu Sans&quot;,&quot;Liberation Sans&quot;,sans-serif">313 mi</text>
<text x="980.8" y="427.6" font-size="12" fill="#fff" textLength="53.3" lengthAdjust="spacingAndGlyphs" style="font-family:&quot;DejaVu Sans&quot;,&quot;Liberation Sans&quot;,sans-serif">Receiver</text>
<text x="1060.4" y="427.6" font-size="12" fill="#00e000" textLength="51.9" lengthAdjust="spacingAndGlyphs" style="font-family:&quot;DejaVu Sans&quot;,&quot;Liberation Sans&quot;,sans-serif">Enabled</text>
<text x="821.0" y="474.6" font-size="12" fill="#c0c0c0" textLength="44.4" lengthAdjust="spacingAndGlyphs" style="font-family:&quot;DejaVu Sans&quot;,&quot;Liberation Sans&quot;,sans-serif">Uptime</text>
<text x="909.9" y="474.6" font-size="12" fill="#fff" textLength="51.9" lengthAdjust="spacingAndGlyphs" style="font-family:&quot;DejaVu Sans&quot;,&quot;Liberation Sans&quot;,sans-serif">1598:15</text>
<text x="980.8" y="474.6" font-size="12" fill="#c0c0c0" textLength="62.6" lengthAdjust="spacingAndGlyphs" style="font-family:&quot;DejaVu Sans&quot;,&quot;Liberation Sans&quot;,sans-serif">Peak time</text>
<text x="1060.4" y="474.6" font-size="12" fill="#c0c0c0" textLength="25.1" lengthAdjust="spacingAndGlyphs" style="font-family:&quot;DejaVu Sans&quot;,&quot;Liberation Sans&quot;,sans-serif">Plot</text>
<text x="821.0" y="498.3" font-size="12" fill="#c0c0c0" textLength="61.3" lengthAdjust="spacingAndGlyphs" style="font-family:&quot;DejaVu Sans&quot;,&quot;Liberation Sans&quot;,sans-serif">Peak rate</text>
<text x="909.1" y="498.3" font-size="12" fill="#fff" textLength="35.0" lengthAdjust="spacingAndGlyphs" style="font-family:&quot;DejaVu Sans&quot;,&quot;Liberation Sans&quot;,sans-serif">2/min</text>
<text x="980.8" y="498.3" font-size="12" fill="#fff" textLength="51.3" lengthAdjust="spacingAndGlyphs" style="font-family:&quot;DejaVu Sans&quot;,&quot;Liberation Sans&quot;,sans-serif">2:01 AM</text>
<text x="1060.4" y="498.3" font-size="12" fill="#fff" textLength="37.0" lengthAdjust="spacingAndGlyphs" style="font-family:&quot;DejaVu Sans&quot;,&quot;Liberation Sans&quot;,sans-serif">Strike</text>
<text x="821.7" y="527.6" font-size="12" fill="#c0c0c0" textLength="77.3" lengthAdjust="spacingAndGlyphs" style="font-family:&quot;DejaVu Sans&quot;,&quot;Liberation Sans&quot;,sans-serif">Trend graph</text>
<text x="908.4" y="527.6" font-size="12" fill="#fff" textLength="41.7" lengthAdjust="spacingAndGlyphs" style="font-family:&quot;DejaVu Sans&quot;,&quot;Liberation Sans&quot;,sans-serif">60 min</text>
<line x1="1088.5" y1="542" x2="1088.5" y2="778" stroke="#c8c8c8" stroke-width="1"/>
<line x1="822" y1="777.5" x2="1089" y2="777.5" stroke="#c8c8c8" stroke-width="1"/>
<line x1="822.5" y1="774" x2="822.5" y2="778" stroke="#c8c8c8" stroke-width="1"/>
<line x1="867.5" y1="774" x2="867.5" y2="778" stroke="#c8c8c8" stroke-width="1"/>
<line x1="911.5" y1="774" x2="911.5" y2="778" stroke="#c8c8c8" stroke-width="1"/>
<line x1="956.5" y1="774" x2="956.5" y2="778" stroke="#c8c8c8" stroke-width="1"/>
<line x1="1000.5" y1="774" x2="1000.5" y2="778" stroke="#c8c8c8" stroke-width="1"/>
<line x1="1044.5" y1="774" x2="1044.5" y2="778" stroke="#c8c8c8" stroke-width="1"/>
<line x1="1085" y1="542.5" x2="1092" y2="542.5" stroke="#c8c8c8" stroke-width="1"/>
<line x1="1086" y1="581.5" x2="1090" y2="581.5" stroke="#c8c8c8" stroke-width="1"/>
<line x1="1085" y1="620.5" x2="1092" y2="620.5" stroke="#c8c8c8" stroke-width="1"/>
<line x1="1086" y1="659.5" x2="1090" y2="659.5" stroke="#c8c8c8" stroke-width="1"/>
<line x1="1085" y1="699.5" x2="1092" y2="699.5" stroke="#c8c8c8" stroke-width="1"/>
<line x1="1086" y1="738.5" x2="1090" y2="738.5" stroke="#c8c8c8" stroke-width="1"/>
<path d="M955.5 777 L957.5 762.5 L960.5 762.5 L962.5 777 M995.5 777 L996.5 769.5 L999.5 769.5 L1001.5 777 M1031.5 777 L1033.5 769.5 L1036.5 769.5 L1038 777 M1049.5 777 L1052 769.5 L1055.5 769.5 L1058 777" fill="none" stroke="#fff" stroke-width="1"/>
<text x="820.1" y="792.4" font-size="11" fill="#c0c0c0" textLength="13.3" lengthAdjust="spacingAndGlyphs" style="font-family:&quot;DejaVu Sans&quot;,&quot;Liberation Sans&quot;,sans-serif">60</text>
<text x="864.3" y="792.4" font-size="11" fill="#c0c0c0" textLength="13.4" lengthAdjust="spacingAndGlyphs" style="font-family:&quot;DejaVu Sans&quot;,&quot;Liberation Sans&quot;,sans-serif">50</text>
<text x="908.6" y="792.4" font-size="11" fill="#c0c0c0" textLength="13.3" lengthAdjust="spacingAndGlyphs" style="font-family:&quot;DejaVu Sans&quot;,&quot;Liberation Sans&quot;,sans-serif">40</text>
<text x="953.1" y="792.4" font-size="11" fill="#c0c0c0" textLength="13.4" lengthAdjust="spacingAndGlyphs" style="font-family:&quot;DejaVu Sans&quot;,&quot;Liberation Sans&quot;,sans-serif">30</text>
<text x="997.4" y="792.4" font-size="11" fill="#c0c0c0" textLength="13.4" lengthAdjust="spacingAndGlyphs" style="font-family:&quot;DejaVu Sans&quot;,&quot;Liberation Sans&quot;,sans-serif">20</text>
<text x="1042.5" y="792.4" font-size="11" fill="#c0c0c0" textLength="13.3" lengthAdjust="spacingAndGlyphs" style="font-family:&quot;DejaVu Sans&quot;,&quot;Liberation Sans&quot;,sans-serif">10</text>
<text x="1087.3" y="792.4" font-size="11" fill="#c0c0c0" textLength="6.6" lengthAdjust="spacingAndGlyphs" style="font-family:&quot;DejaVu Sans&quot;,&quot;Liberation Sans&quot;,sans-serif">0</text>
<text x="1100.2" y="792.4" font-size="11" fill="#c0c0c0" textLength="18.3" lengthAdjust="spacingAndGlyphs" style="font-family:&quot;DejaVu Sans&quot;,&quot;Liberation Sans&quot;,sans-serif">min</text>
<text x="1092.6" y="547.3" font-size="11" fill="#c0c0c0" textLength="13.4" lengthAdjust="spacingAndGlyphs" style="font-family:&quot;DejaVu Sans&quot;,&quot;Liberation Sans&quot;,sans-serif">30</text>
<text x="1092.6" y="625.7" font-size="11" fill="#c0c0c0" textLength="13.4" lengthAdjust="spacingAndGlyphs" style="font-family:&quot;DejaVu Sans&quot;,&quot;Liberation Sans&quot;,sans-serif">20</text>
<text x="1092.6" y="704.0" font-size="11" fill="#c0c0c0" textLength="13.4" lengthAdjust="spacingAndGlyphs" style="font-family:&quot;DejaVu Sans&quot;,&quot;Liberation Sans&quot;,sans-serif">10</text>
<rect x="8.5" y="758.5" width="244" height="45" fill="#000" stroke="#a8a8a8" stroke-width="1"/>
<rect x="10.5" y="760.5" width="240" height="41" fill="#000" stroke="#484848" stroke-width="1"/>
<text x="12.7" y="770.9" font-size="9.1" fill="#fff" textLength="36.8" lengthAdjust="spacingAndGlyphs" style="font-family:&quot;DejaVu Sans Condensed&quot;,&quot;DejaVu Sans&quot;,&quot;Liberation Sans&quot;,sans-serif">Symbols</text>
<text x="52.7" y="770.9" font-size="9.1" fill="#fff" textLength="17.6" lengthAdjust="spacingAndGlyphs" style="font-family:&quot;DejaVu Sans Condensed&quot;,&quot;DejaVu Sans&quot;,&quot;Liberation Sans&quot;,sans-serif">-CG</text>
<text x="77.6" y="770.9" font-size="9.1" fill="#fff" textLength="14.8" lengthAdjust="spacingAndGlyphs" style="font-family:&quot;DejaVu Sans Condensed&quot;,&quot;DejaVu Sans&quot;,&quot;Liberation Sans&quot;,sans-serif">-IC</text>
<text x="98.8" y="770.9" font-size="9.1" fill="#fff" textLength="20.4" lengthAdjust="spacingAndGlyphs" style="font-family:&quot;DejaVu Sans Condensed&quot;,&quot;DejaVu Sans&quot;,&quot;Liberation Sans&quot;,sans-serif">+CG</text>
<text x="123.6" y="770.9" font-size="9.1" fill="#fff" textLength="17.8" lengthAdjust="spacingAndGlyphs" style="font-family:&quot;DejaVu Sans Condensed&quot;,&quot;DejaVu Sans&quot;,&quot;Liberation Sans&quot;,sans-serif">+IC</text>
<text x="152.9" y="770.9" font-size="9.1" fill="#fff" textLength="90.7" lengthAdjust="spacingAndGlyphs" style="font-family:&quot;DejaVu Sans Condensed&quot;,&quot;DejaVu Sans&quot;,&quot;Liberation Sans&quot;,sans-serif">Strike age color codes</text>
<text x="12.7" y="783.7" font-size="9.1" fill="#fff" textLength="28.7" lengthAdjust="spacingAndGlyphs" style="font-family:&quot;DejaVu Sans Condensed&quot;,&quot;DejaVu Sans&quot;,&quot;Liberation Sans&quot;,sans-serif">Recent</text>
<text x="12.7" y="796.6" font-size="9.1" fill="#fff" textLength="15.2" lengthAdjust="spacingAndGlyphs" style="font-family:&quot;DejaVu Sans Condensed&quot;,&quot;DejaVu Sans&quot;,&quot;Liberation Sans&quot;,sans-serif">Old</text>
<g stroke="#00e8e8" fill="none" stroke-width="1"><circle cx="60.5" cy="780.5" r="4.5"/><path d="M58 780.5H63 M82 780.5H89 M107.7 780.5H112.7 M110.2 778.0V783.0 M132 780.5H139 M135.5 777.0V784.0"/><circle cx="110.2" cy="780.5" r="4.5"/></g>
<g stroke="#f0f000" fill="none" stroke-width="1"><circle cx="60.5" cy="793.5" r="4.5"/><path d="M58 793.5H63 M82 793.5H89 M107.7 793.5H112.7 M110.2 791.0V796.0 M132 793.5H139 M135.5 790.0V797.0"/><circle cx="110.2" cy="793.5" r="4.5"/></g>
<text x="153.2" y="783.7" font-size="9.1" fill="#ffc800" textLength="16.2" lengthAdjust="spacingAndGlyphs" style="font-family:&quot;DejaVu Sans Condensed&quot;,&quot;DejaVu Sans&quot;,&quot;Liberation Sans&quot;,sans-serif">15+</text>
<text x="188.0" y="783.7" font-size="9.1" fill="#ffa800" textLength="16.4" lengthAdjust="spacingAndGlyphs" style="font-family:&quot;DejaVu Sans Condensed&quot;,&quot;DejaVu Sans&quot;,&quot;Liberation Sans&quot;,sans-serif">30+</text>
<text x="222.8" y="783.7" font-size="9.1" fill="#ff9000" textLength="16.8" lengthAdjust="spacingAndGlyphs" style="font-family:&quot;DejaVu Sans Condensed&quot;,&quot;DejaVu Sans&quot;,&quot;Liberation Sans&quot;,sans-serif">45+</text>
<text x="153.2" y="796.6" font-size="9.1" fill="#ff7800" textLength="16.2" lengthAdjust="spacingAndGlyphs" style="font-family:&quot;DejaVu Sans Condensed&quot;,&quot;DejaVu Sans&quot;,&quot;Liberation Sans&quot;,sans-serif">60+</text>
<text x="188.0" y="796.6" font-size="9.1" fill="#ff5800" textLength="16.4" lengthAdjust="spacingAndGlyphs" style="font-family:&quot;DejaVu Sans Condensed&quot;,&quot;DejaVu Sans&quot;,&quot;Liberation Sans&quot;,sans-serif">75+</text>
<text x="222.8" y="796.6" font-size="9.1" fill="#ff3000" textLength="16.8" lengthAdjust="spacingAndGlyphs" style="font-family:&quot;DejaVu Sans Condensed&quot;,&quot;DejaVu Sans&quot;,&quot;Liberation Sans&quot;,sans-serif">90+</text>
<rect x="685" y="792" width="121" height="14" fill="#000"/>
<text x="688.6" y="802.0" font-size="9.1" fill="#fff" textLength="113.8" lengthAdjust="spacingAndGlyphs" style="font-family:&quot;DejaVu Sans Condensed&quot;,&quot;DejaVu Sans&quot;,&quot;Liberation Sans&quot;,sans-serif">©2005 Astrogenic Systems</text>
</svg></body></html>
